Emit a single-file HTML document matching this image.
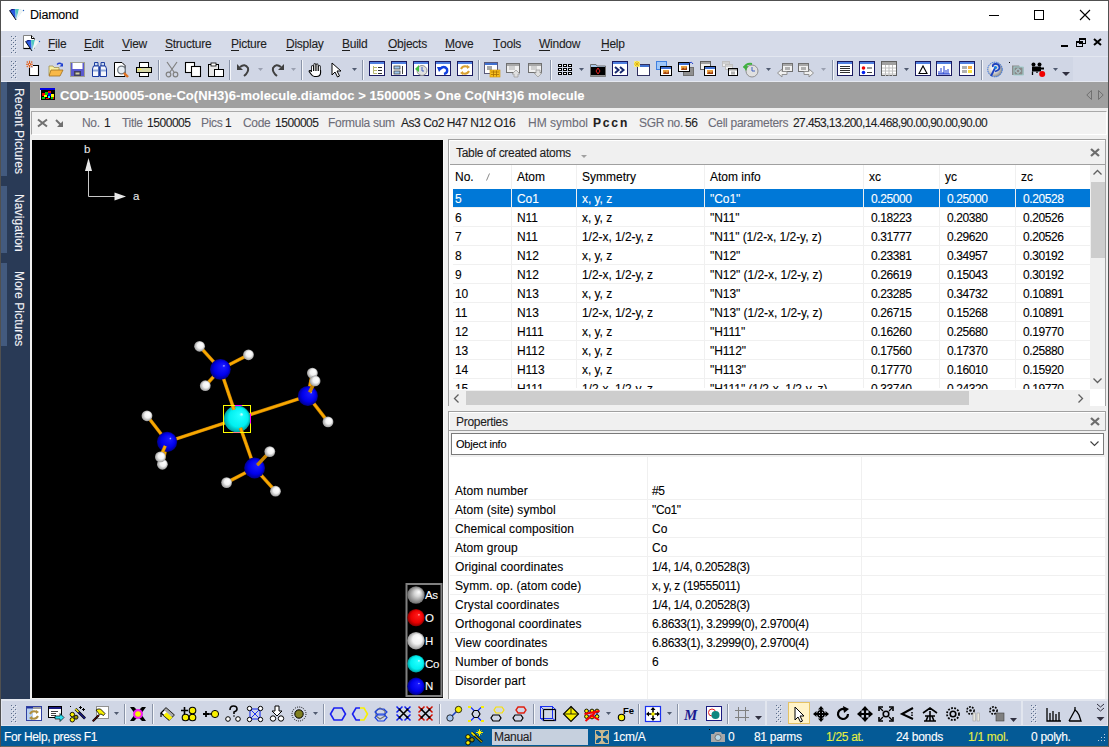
<!DOCTYPE html>
<html><head><meta charset="utf-8">
<style>
*{margin:0;padding:0;box-sizing:border-box}
html,body{width:1109px;height:747px;overflow:hidden;background:#f0f0f0;font-family:"Liberation Sans",sans-serif;font-size:12px;color:#000}
.a{position:absolute}
.t{position:absolute;white-space:nowrap;line-height:14px;-webkit-text-stroke:0.1px currentColor}
svg{position:absolute;overflow:visible}
u{text-decoration:none;border-bottom:1px solid currentColor;line-height:11px;display:inline-block}
</style></head><body>

<div class="a" style="left:0px;top:0px;width:1109px;height:31px;background:#fff;"></div>
<div class="t" style="left:30px;top:8px;font-size:12.5px;color:#000;font-weight:normal;letter-spacing:-0.2px;">Diamond</div>
<svg style="left:9px;top:9px;" width="15" height="11" viewBox="0 0 15 11"><path d="M0.5 1.5L3 0H11L14 1.5L7 11Z" fill="#c8e8f0"/><path d="M0.5 1.5L3 0H6L7 11Z" fill="#2a5ae0"/><path d="M0.5 1.5L3 0H6L2.5 1.5Z" fill="#1a1a70"/><path d="M6 0H10L7.5 11Z" fill="#50c8c0"/><path d="M7 3L8 11L6 11Z" fill="#a8c8f0"/><path d="M10 0L14 1.5L7 11Z" fill="#f0f4f4"/><path d="M0.5 1.5L7 11" stroke="#000" stroke-width="0.9"/><circle cx="14.5" cy="1.5" r="0.7" fill="#2060c0"/></svg>
<div class="a" style="left:989px;top:15px;width:10px;height:1px;background:#000;"></div>
<div class="a" style="left:1034px;top:10px;width:10px;height:10px;border:1px solid #000"></div>
<svg style="left:1080px;top:10px;" width="10" height="10" viewBox="0 0 10 10"><path d="M0 0L10 10M10 0L0 10" stroke="#000" stroke-width="1.1"/></svg>
<div class="a" style="left:0px;top:31px;width:1109px;height:51px;background:#d6dbe9;"></div>
<div class="a" style="left:0px;top:56px;width:1109px;height:1px;background:#e3e7f0;"></div>
<div class="a" style="left:2px;top:57px;width:1071px;height:24px;background:#d0d6e5;"></div>
<div class="a" style="left:0px;top:81px;width:1109px;height:1px;background:#e6e9f1;"></div>
<svg style="left:11px;top:36px;" width="6" height="20" viewBox="0 0 6 20"><rect x="1" y="1" width="1" height="1" fill="#e8ebf2"/><rect x="0" y="0" width="1" height="1" fill="#5b6d8a"/><rect x="5" y="1" width="1" height="1" fill="#e8ebf2"/><rect x="4" y="0" width="1" height="1" fill="#5b6d8a"/><rect x="3" y="3" width="1" height="1" fill="#e8ebf2"/><rect x="2" y="2" width="1" height="1" fill="#5b6d8a"/><rect x="1" y="5" width="1" height="1" fill="#e8ebf2"/><rect x="0" y="4" width="1" height="1" fill="#5b6d8a"/><rect x="5" y="5" width="1" height="1" fill="#e8ebf2"/><rect x="4" y="4" width="1" height="1" fill="#5b6d8a"/><rect x="3" y="7" width="1" height="1" fill="#e8ebf2"/><rect x="2" y="6" width="1" height="1" fill="#5b6d8a"/><rect x="1" y="9" width="1" height="1" fill="#e8ebf2"/><rect x="0" y="8" width="1" height="1" fill="#5b6d8a"/><rect x="5" y="9" width="1" height="1" fill="#e8ebf2"/><rect x="4" y="8" width="1" height="1" fill="#5b6d8a"/><rect x="3" y="11" width="1" height="1" fill="#e8ebf2"/><rect x="2" y="10" width="1" height="1" fill="#5b6d8a"/><rect x="1" y="13" width="1" height="1" fill="#e8ebf2"/><rect x="0" y="12" width="1" height="1" fill="#5b6d8a"/><rect x="5" y="13" width="1" height="1" fill="#e8ebf2"/><rect x="4" y="12" width="1" height="1" fill="#5b6d8a"/><rect x="3" y="15" width="1" height="1" fill="#e8ebf2"/><rect x="2" y="14" width="1" height="1" fill="#5b6d8a"/><rect x="1" y="17" width="1" height="1" fill="#e8ebf2"/><rect x="0" y="16" width="1" height="1" fill="#5b6d8a"/><rect x="5" y="17" width="1" height="1" fill="#e8ebf2"/><rect x="4" y="16" width="1" height="1" fill="#5b6d8a"/></svg>
<svg style="left:23px;top:35px;" width="12" height="14" viewBox="0 0 12 14"><path d="M0.5 0.5H8.5L11.5 3.5V13.5H0.5Z" fill="#fff" stroke="#808080"/><path d="M8.5 0.5V3.5H11.5" fill="none" stroke="#000"/><path d="M0.5 13.5H9" stroke="#000" stroke-width="1.2"/></svg>
<svg style="left:25px;top:40px;" width="15" height="11" viewBox="0 0 15 11"><path d="M0.5 1.5L3 0H11L14 1.5L7 11Z" fill="#c8e8f0"/><path d="M0.5 1.5L3 0H6L7 11Z" fill="#2a5ae0"/><path d="M0.5 1.5L3 0H6L2.5 1.5Z" fill="#1a1a70"/><path d="M6 0H10L7.5 11Z" fill="#50c8c0"/><path d="M7 3L8 11L6 11Z" fill="#a8c8f0"/><path d="M10 0L14 1.5L7 11Z" fill="#f0f4f4"/><path d="M0.5 1.5L7 11" stroke="#000" stroke-width="0.9"/><circle cx="14.5" cy="1.5" r="0.7" fill="#2060c0"/></svg>
<div class="t" style="left:48px;top:37px;font-size:12px;color:#1e1e1e;font-weight:normal;letter-spacing:-0.25px;"><u>F</u>ile</div>
<div class="t" style="left:84px;top:37px;font-size:12px;color:#1e1e1e;font-weight:normal;letter-spacing:-0.25px;"><u>E</u>dit</div>
<div class="t" style="left:122px;top:37px;font-size:12px;color:#1e1e1e;font-weight:normal;letter-spacing:-0.25px;"><u>V</u>iew</div>
<div class="t" style="left:165px;top:37px;font-size:12px;color:#1e1e1e;font-weight:normal;letter-spacing:-0.25px;"><u>S</u>tructure</div>
<div class="t" style="left:231px;top:37px;font-size:12px;color:#1e1e1e;font-weight:normal;letter-spacing:-0.25px;"><u>P</u>icture</div>
<div class="t" style="left:286px;top:37px;font-size:12px;color:#1e1e1e;font-weight:normal;letter-spacing:-0.25px;"><u>D</u>isplay</div>
<div class="t" style="left:342px;top:37px;font-size:12px;color:#1e1e1e;font-weight:normal;letter-spacing:-0.25px;"><u>B</u>uild</div>
<div class="t" style="left:388px;top:37px;font-size:12px;color:#1e1e1e;font-weight:normal;letter-spacing:-0.25px;"><u>O</u>bjects</div>
<div class="t" style="left:445px;top:37px;font-size:12px;color:#1e1e1e;font-weight:normal;letter-spacing:-0.25px;"><u>M</u>ove</div>
<div class="t" style="left:493px;top:37px;font-size:12px;color:#1e1e1e;font-weight:normal;letter-spacing:-0.25px;"><u>T</u>ools</div>
<div class="t" style="left:539px;top:37px;font-size:12px;color:#1e1e1e;font-weight:normal;letter-spacing:-0.25px;"><u>W</u>indow</div>
<div class="t" style="left:601px;top:37px;font-size:12px;color:#1e1e1e;font-weight:normal;letter-spacing:-0.25px;"><u>H</u>elp</div>
<div class="a" style="left:1061px;top:45px;width:7px;height:2px;background:#000;"></div>
<svg style="left:1076px;top:38px;" width="10" height="9" viewBox="0 0 10 9"><rect x="0.5" y="3.5" width="6" height="5" fill="none" stroke="#000"/><rect x="3.5" y="0.5" width="6" height="5" fill="none" stroke="#000"/><rect x="3" y="0" width="7" height="2" fill="#000"/><rect x="0" y="3" width="7" height="2" fill="#000"/></svg>
<svg style="left:1093px;top:38px;" width="9" height="8" viewBox="0 0 9 8"><path d="M1 1L8 7M8 1L1 7" stroke="#000" stroke-width="2"/></svg>
<svg style="left:11px;top:61px;" width="6" height="20" viewBox="0 0 6 20"><rect x="1" y="1" width="1" height="1" fill="#e8ebf2"/><rect x="0" y="0" width="1" height="1" fill="#5b6d8a"/><rect x="5" y="1" width="1" height="1" fill="#e8ebf2"/><rect x="4" y="0" width="1" height="1" fill="#5b6d8a"/><rect x="3" y="3" width="1" height="1" fill="#e8ebf2"/><rect x="2" y="2" width="1" height="1" fill="#5b6d8a"/><rect x="1" y="5" width="1" height="1" fill="#e8ebf2"/><rect x="0" y="4" width="1" height="1" fill="#5b6d8a"/><rect x="5" y="5" width="1" height="1" fill="#e8ebf2"/><rect x="4" y="4" width="1" height="1" fill="#5b6d8a"/><rect x="3" y="7" width="1" height="1" fill="#e8ebf2"/><rect x="2" y="6" width="1" height="1" fill="#5b6d8a"/><rect x="1" y="9" width="1" height="1" fill="#e8ebf2"/><rect x="0" y="8" width="1" height="1" fill="#5b6d8a"/><rect x="5" y="9" width="1" height="1" fill="#e8ebf2"/><rect x="4" y="8" width="1" height="1" fill="#5b6d8a"/><rect x="3" y="11" width="1" height="1" fill="#e8ebf2"/><rect x="2" y="10" width="1" height="1" fill="#5b6d8a"/><rect x="1" y="13" width="1" height="1" fill="#e8ebf2"/><rect x="0" y="12" width="1" height="1" fill="#5b6d8a"/><rect x="5" y="13" width="1" height="1" fill="#e8ebf2"/><rect x="4" y="12" width="1" height="1" fill="#5b6d8a"/><rect x="3" y="15" width="1" height="1" fill="#e8ebf2"/><rect x="2" y="14" width="1" height="1" fill="#5b6d8a"/><rect x="1" y="17" width="1" height="1" fill="#e8ebf2"/><rect x="0" y="16" width="1" height="1" fill="#5b6d8a"/><rect x="5" y="17" width="1" height="1" fill="#e8ebf2"/><rect x="4" y="16" width="1" height="1" fill="#5b6d8a"/></svg>
<svg style="left:25px;top:62px;" width="16" height="16" viewBox="0 0 16 16"><path d="M4.5 3.5H13.5V13.5H4.5Z" fill="#fff" stroke="#000" stroke-width="1.1"/><rect x="1" y="-1" width="7" height="7" fill="#d0d6e5"/><g stroke="#e06020" stroke-width="1.1"><path d="M4.5 -1.2V5.8M1 2.3H8"/></g><g fill="#e06020"><circle cx="2.3" cy="0.1" r="0.8"/><circle cx="6.7" cy="0.1" r="0.8"/><circle cx="2.3" cy="4.5" r="0.8"/><circle cx="6.7" cy="4.5" r="0.8"/><circle cx="4.5" cy="2.3" r="1.6"/></g><circle cx="4.5" cy="2.3" r="0.6" fill="#fff"/></svg>
<svg style="left:48px;top:62px;" width="16" height="16" viewBox="0 0 16 16"><path d="M1 4H5L6 5.5H11V13H1Z" fill="#f8f0a0" stroke="#a09050" stroke-width="0.8"/><path d="M3 8H15L12 14H1Z" fill="#f8b848" stroke="#a07020" stroke-width="0.8"/><path d="M9 2.5Q11.5 0 14 2.5" stroke="#2040d0" stroke-width="1.3" fill="none"/><path d="M15 1V4.5H11.5Z" fill="#2040d0"/></svg>
<svg style="left:70px;top:62px;" width="16" height="16" viewBox="0 0 16 16"><rect x="0.5" y="0.5" width="14" height="14" fill="#5a5ad0" stroke="#a0a090"/><rect x="2.5" y="1" width="10" height="6" fill="#fff"/><rect x="4" y="9" width="7" height="5" fill="#404060"/><rect x="5.5" y="10.5" width="4" height="2" fill="#d0d0a0"/></svg>
<svg style="left:92px;top:62px;" width="16" height="16" viewBox="0 0 16 16"><path d="M2.5 0.5H6V4H2.5Z" fill="#c8d8f0" stroke="#2040a0"/><path d="M9 0.5H12.5V4H9Z" fill="#c8d8f0" stroke="#2040a0"/><path d="M0.5 14.5V7L1.5 4H7V14.5Z" fill="#f4f6fc" stroke="#1a3aa0"/><path d="M8 14.5V4H13.5L14.5 7V14.5Z" fill="#f4f6fc" stroke="#1a3aa0"/><rect x="1" y="7.5" width="5.5" height="2" fill="#90a8d8"/><rect x="8.5" y="7.5" width="5.5" height="2" fill="#90a8d8"/><rect x="6.5" y="5" width="2" height="9" fill="#1a3aa0"/></svg>
<svg style="left:114px;top:62px;" width="16" height="16" viewBox="0 0 16 16"><path d="M0.5 0.5H8L11 3.5V14.5H0.5Z" fill="#fff" stroke="#000"/><circle cx="7.5" cy="8" r="3.8" fill="#e8eef4" stroke="#707880" stroke-width="1.3"/><path d="M10 11L14 15" stroke="#e07020" stroke-width="2.4"/></svg>
<svg style="left:136px;top:62px;" width="16" height="16" viewBox="0 0 16 16"><rect x="3.5" y="0.5" width="9" height="5" fill="#fff" stroke="#000"/><rect x="0.5" y="5.5" width="15" height="5" fill="#d8d8a8" stroke="#000"/><rect x="2" y="7" width="1" height="1" fill="#ff0"/><rect x="4" y="7" width="1" height="1" fill="#ff0"/><rect x="3.5" y="10.5" width="9" height="4" fill="#fff" stroke="#000"/></svg>
<svg style="left:164px;top:62px;" width="16" height="16" viewBox="0 0 16 16"><path d="M3 0L10 10M13 0L6 10" stroke="#808080" stroke-width="1.2"/><circle cx="4.5" cy="12.5" r="2.3" fill="none" stroke="#808080" stroke-width="1.2"/><circle cx="11.5" cy="12.5" r="2.3" fill="none" stroke="#808080" stroke-width="1.2"/></svg>
<svg style="left:185px;top:62px;" width="16" height="16" viewBox="0 0 16 16"><rect x="0.5" y="0.5" width="9" height="10" fill="#fff" stroke="#000" stroke-width="1.1"/><rect x="6.5" y="4.5" width="9" height="10" fill="#fff" stroke="#000" stroke-width="1.1"/></svg>
<svg style="left:208px;top:62px;" width="16" height="16" viewBox="0 0 16 16"><rect x="0.5" y="2.5" width="10" height="12" fill="#e8e8e8" stroke="#000"/><rect x="3" y="1" width="5" height="3" fill="#fff" stroke="#000" stroke-width="0.8"/><rect x="6.5" y="7.5" width="9" height="7" fill="#fff" stroke="#000"/></svg>
<svg style="left:236px;top:62px;" width="16" height="16" viewBox="0 0 16 16"><path d="M4 5Q9 1 12 6Q13 10 8 14" stroke="#404040" stroke-width="2" fill="none"/><path d="M1 2V8H7Z" fill="#404040"/></svg>
<svg style="left:269px;top:62px;" width="16" height="16" viewBox="0 0 16 16"><path d="M12 5Q7 1 4 6Q3 10 8 14" stroke="#404040" stroke-width="2" fill="none"/><path d="M15 2V8H9Z" fill="#404040"/></svg>
<svg style="left:308px;top:62px;" width="16" height="16" viewBox="0 0 16 16"><g stroke-linecap="round"><path d="M4.5 4.5V9M6.8 2.5V9M9.1 2.8V9M11.4 4.5V9" stroke="#000" stroke-width="2.6"/></g><path d="M3.5 8.5H12.6V10.5Q12.6 14.5 8.5 14.5H6.5Q4.5 14.5 3 12L1.2 9.6Q1 8.2 2.4 8.6L3.5 9.5Z" fill="#fff" stroke="#000" stroke-width="1.1" stroke-linejoin="round"/><g stroke-linecap="round"><path d="M4.5 4.5V10M6.8 2.5V10M9.1 2.8V10M11.4 4.5V10" stroke="#fff" stroke-width="1.1"/></g></svg>
<svg style="left:329px;top:62px;" width="16" height="16" viewBox="0 0 16 16"><path d="M3 1V13L6 10L8.5 15L10.5 14L8 9H12Z" fill="#fff" stroke="#000" stroke-width="1"/></svg>
<svg style="left:369px;top:61px;" width="16" height="16" viewBox="0 0 16 16"><rect x="0.5" y="0.5" width="15" height="14" fill="#fff" stroke="#1a1a60"/><rect x="1" y="1" width="14" height="2" fill="#5080e0"/><path d="M4.5 5V12.5M4.5 6.5H8M4.5 9.5H8M4.5 12.5H8" stroke="#b8b870"/><path d="M9 6.5H13M9 9.5H13M9 12.5H13" stroke="#303030"/></svg>
<svg style="left:391px;top:61px;" width="16" height="16" viewBox="0 0 16 16"><rect x="0.5" y="0.5" width="15" height="14" fill="#fff" stroke="#1a1a60"/><rect x="1" y="1" width="14" height="2" fill="#5080e0"/><rect x="3" y="5" width="6" height="3" fill="#a0c8f0" stroke="#404040" stroke-width="0.8"/><rect x="3" y="10" width="6" height="3" fill="#a0c8f0" stroke="#404040" stroke-width="0.8"/><path d="M11.5 5V13" stroke="#404040"/></svg>
<svg style="left:413px;top:61px;" width="16" height="16" viewBox="0 0 16 16"><rect x="0.5" y="0.5" width="15" height="14" fill="#fff" stroke="#1a1a60"/><rect x="1" y="1" width="14" height="2" fill="#5080e0"/><circle cx="9" cy="9.5" r="5" fill="#e0e0e0" stroke="#909090"/><path d="M9 6V10H11" stroke="#4060c0" fill="none"/><path d="M2 8L6 4L6 11Z" fill="#40c040"/></svg>
<svg style="left:435px;top:61px;" width="16" height="16" viewBox="0 0 16 16"><rect x="0.5" y="0.5" width="15" height="14" fill="#fff" stroke="#1a1a60"/><rect x="1" y="1" width="14" height="2" fill="#5080e0"/><path d="M5 8Q9 4 12 8Q13 12 9 13" stroke="#1040e0" stroke-width="2.4" fill="none"/><path d="M2 6H8L4 11Z" fill="#1040e0"/></svg>
<svg style="left:457px;top:61px;" width="16" height="16" viewBox="0 0 16 16"><rect x="0.5" y="0.5" width="15" height="14" fill="#fff" stroke="#1a1a60"/><rect x="1" y="1" width="14" height="2" fill="#5080e0"/><path d="M4 8Q6 4 11 6M12 10Q10 14 5 12" stroke="#d8a030" stroke-width="2" fill="none"/><path d="M10 4L13 6L10 8Z M6 10L3 12L6 14Z" fill="#d8a030"/></svg>
<svg style="left:484px;top:62px;" width="16" height="16" viewBox="0 0 16 16"><rect x="0.5" y="0.5" width="13" height="11" fill="#fff" stroke="#5a5a7a"/><rect x="1" y="1" width="12" height="2" fill="#4070d0"/><path d="M3 5H8M3 7H8" stroke="#505050"/><rect x="6" y="8" width="10" height="7" fill="#f8c020" stroke="#d09000" stroke-width="0.6"/><path d="M7 10H15M7 12.5H15M9.5 8.5V14.5M12.5 8.5V14.5" stroke="#a87000" stroke-width="0.8"/></svg>
<svg style="left:506px;top:62px;" width="16" height="16" viewBox="0 0 16 16"><rect x="0.5" y="1.5" width="13" height="9" fill="#f0f0f0" stroke="#707070"/><rect x="1" y="2" width="12" height="2" fill="#a8a8a8"/><path d="M3 5H9M3 7H9" stroke="#b0b0b0"/><path d="M10 8L14 12H12V15H8V12H6Z" fill="#e0e0e0" stroke="#a0a0a0" stroke-width="0.8"/></svg>
<svg style="left:528px;top:62px;" width="16" height="16" viewBox="0 0 16 16"><rect x="0.5" y="1.5" width="13" height="9" fill="#f0f0f0" stroke="#707070"/><rect x="1" y="2" width="12" height="2" fill="#a8a8a8"/><path d="M3 5H9M3 7H9" stroke="#b0b0b0"/><path d="M10 15L14 11H12V8H8V11H6Z" fill="#e0e0e0" stroke="#a0a0a0" stroke-width="0.8"/></svg>
<svg style="left:557px;top:62px;" width="16" height="16" viewBox="0 0 16 16"><rect x="1" y="2" width="4" height="3" fill="#000"/><rect x="2" y="3" width="2" height="1" fill="#fff"/><rect x="1" y="6" width="4" height="3" fill="#000"/><rect x="2" y="7" width="2" height="1" fill="#fff"/><rect x="1" y="10" width="4" height="3" fill="#000"/><rect x="2" y="11" width="2" height="1" fill="#fff"/><rect x="6" y="2" width="4" height="3" fill="#000"/><rect x="7" y="3" width="2" height="1" fill="#fff"/><rect x="6" y="6" width="4" height="3" fill="#000"/><rect x="7" y="7" width="2" height="1" fill="#fff"/><rect x="6" y="10" width="4" height="3" fill="#000"/><rect x="7" y="11" width="2" height="1" fill="#fff"/><rect x="11" y="2" width="4" height="3" fill="#000"/><rect x="12" y="3" width="2" height="1" fill="#fff"/><rect x="11" y="6" width="4" height="3" fill="#000"/><rect x="12" y="7" width="2" height="1" fill="#fff"/><rect x="11" y="10" width="4" height="3" fill="#000"/><rect x="12" y="11" width="2" height="1" fill="#fff"/></svg>
<svg style="left:590px;top:62px;" width="16" height="16" viewBox="0 0 16 16"><path d="M0.5 2.5H6L7 4H15.5V14.5H0.5Z" fill="#a8c8e8" stroke="#707070"/><rect x="1" y="5" width="14" height="8" fill="#000"/><path d="M8 6L10 9L8 12L6 9Z" fill="none" stroke="#e02020"/><rect x="0.5" y="13" width="15" height="1.5" fill="#909090"/></svg>
<svg style="left:612px;top:61px;" width="16" height="16" viewBox="0 0 16 16"><rect x="0.5" y="0.5" width="15" height="14" fill="#fff" stroke="#1a1a60"/><rect x="1" y="1" width="14" height="2" fill="#5080e0"/><path d="M3 6L6.5 9L3 12M8 6L11.5 9L8 12" stroke="#1a2a70" stroke-width="2" fill="none"/></svg>
<svg style="left:634px;top:61px;" width="16" height="16" viewBox="0 0 16 16"><rect x="3.5" y="3.5" width="12" height="11" fill="#fff" stroke="#303060"/><rect x="4" y="4" width="11" height="2" fill="#4070d0"/><rect x="0" y="0" width="6" height="6" fill="#f8f080"/><path d="M3 0V6M0 3H6M1 1L5 5M5 1L1 5" stroke="#e0b000" stroke-width="0.8"/></svg>
<svg style="left:656px;top:61px;" width="16" height="16" viewBox="0 0 16 16"><rect x="0.5" y="0.5" width="10" height="8" fill="#a0c8f8" stroke="#4080e0"/><rect x="4.5" y="5.5" width="11" height="9" fill="#fff" stroke="#000"/><rect x="5" y="6" width="10" height="2" fill="#4070d0"/><rect x="7" y="9" width="6" height="4" fill="#e8a040"/><path d="M7 13L9 10.5L11 12L13 10V13Z" fill="#a04010"/></svg>
<svg style="left:678px;top:61px;" width="16" height="16" viewBox="0 0 16 16"><rect x="5.5" y="6.5" width="10" height="8" fill="#909090" stroke="#707070"/><rect x="0.5" y="1.5" width="11" height="9" fill="#fff" stroke="#000"/><rect x="1" y="2" width="10" height="2" fill="#4070d0"/><rect x="3" y="5" width="6" height="4" fill="#e8a040"/><path d="M3 9L5 6.5L7 8L9 6V9Z" fill="#a04010"/><path d="M11 2Q14 0 15 3" stroke="#2040d0" fill="none"/></svg>
<svg style="left:700px;top:61px;" width="16" height="16" viewBox="0 0 16 16"><rect x="0.5" y="0.5" width="10" height="8" fill="#f0f0f0" stroke="#606060"/><rect x="1" y="1" width="9" height="2" fill="#a0a0a0"/><rect x="4.5" y="5.5" width="11" height="9" fill="#fff" stroke="#000"/><rect x="5" y="6" width="10" height="2" fill="#4070d0"/><rect x="7" y="9" width="6" height="4" fill="#e8a040"/><path d="M7 13L9 10.5L11 12L13 10V13Z" fill="#a04010"/></svg>
<svg style="left:722px;top:61px;" width="16" height="16" viewBox="0 0 16 16"><rect x="0.5" y="0.5" width="7" height="5" fill="#f0f0f0" stroke="#c0c0c0"/><rect x="1" y="1" width="6" height="2" fill="#d0d0d0"/><rect x="3.5" y="3.5" width="7" height="5" fill="#f0f0f0" stroke="#c0c0c0"/><rect x="4" y="4" width="6" height="2" fill="#d0d0d0"/><rect x="6.5" y="7.5" width="9" height="7" fill="#fff" stroke="#000"/><rect x="7" y="8" width="8" height="1.5" fill="#a0a0a0"/><rect x="9" y="10.5" width="4" height="3" fill="#b0b0b0"/></svg>
<svg style="left:743px;top:62px;" width="16" height="16" viewBox="0 0 16 16"><circle cx="9" cy="9" r="6" fill="#e0e0e0" stroke="#909090"/><path d="M9 5V9H12" stroke="#4060c0" fill="none"/><path d="M1 6Q3 1 9 2" stroke="#40b040" stroke-width="2" fill="none"/><path d="M0 4L3 9L5 4Z" fill="#40b040"/></svg>
<svg style="left:777px;top:62px;" width="16" height="16" viewBox="0 0 16 16"><rect x="5.5" y="1.5" width="10" height="8" fill="#f0f0f0" stroke="#707070"/><rect x="6" y="2" width="9" height="2" fill="#a8a8a8"/><rect x="8" y="5" width="5" height="3" fill="#b0b0b0"/><path d="M0.5 11L5 7V9.5H10V12.5H5V15Z" fill="#f0f0f0" stroke="#909090"/></svg>
<svg style="left:798px;top:62px;" width="16" height="16" viewBox="0 0 16 16"><rect x="0.5" y="1.5" width="10" height="8" fill="#f0f0f0" stroke="#707070"/><rect x="1" y="2" width="9" height="2" fill="#a8a8a8"/><rect x="3" y="5" width="5" height="3" fill="#b0b0b0"/><path d="M15.5 11L11 7V9.5H6V12.5H11V15Z" fill="#f0f0f0" stroke="#909090"/></svg>
<svg style="left:837px;top:61px;" width="16" height="16" viewBox="0 0 16 16"><rect x="0.5" y="0.5" width="15" height="14" fill="#fff" stroke="#1a1a60"/><rect x="1" y="1" width="14" height="2" fill="#5080e0"/><path d="M3 5.5H13M3 7.5H13M3 9.5H13M3 11.5H13" stroke="#303030"/></svg>
<svg style="left:859px;top:61px;" width="16" height="16" viewBox="0 0 16 16"><rect x="0.5" y="0.5" width="15" height="14" fill="#fff" stroke="#1a1a60"/><rect x="1" y="1" width="14" height="2" fill="#5080e0"/><circle cx="4.5" cy="7" r="1.8" fill="#f00000"/><circle cx="4.5" cy="11.5" r="1.8" fill="#0020f0"/><path d="M8 7H13M8 11.5H13" stroke="#404040" stroke-width="1.2"/></svg>
<svg style="left:881px;top:61px;" width="16" height="16" viewBox="0 0 16 16"><rect x="0.5" y="0.5" width="15" height="14" fill="#fff" stroke="#606060"/><rect x="1" y="1" width="14" height="3" fill="#a0a0a0"/><path d="M1 7H15M1 10H15M1 13H15M4.5 4V15M8 4V15M11.5 4V15" stroke="#c0c0c0"/></svg>
<svg style="left:915px;top:61px;" width="16" height="16" viewBox="0 0 16 16"><rect x="0.5" y="0.5" width="15" height="14" fill="#fff" stroke="#1a1a60"/><rect x="1" y="1" width="14" height="2" fill="#5080e0"/><path d="M4 12.5L8 5L12 12.5Z" fill="none" stroke="#000" stroke-width="1.1"/></svg>
<svg style="left:936px;top:61px;" width="16" height="16" viewBox="0 0 16 16"><rect x="0.5" y="0.5" width="15" height="14" fill="#fff" stroke="#1a1a60"/><rect x="1" y="1" width="14" height="2" fill="#5080e0"/><path d="M2 13H14M3 13V10M5 13V7M7 13V11M8 13V5M10 13V9M12 13V8" stroke="#1a3ad0"/></svg>
<svg style="left:959px;top:61px;" width="16" height="16" viewBox="0 0 16 16"><rect x="0.5" y="0.5" width="15" height="14" fill="#fff" stroke="#1a1a60"/><rect x="1" y="1" width="14" height="2" fill="#5080e0"/><rect x="3" y="5" width="5" height="3" fill="#b0b0b0"/><rect x="3" y="9" width="5" height="3" fill="#b0b0b0"/><rect x="9" y="5" width="4" height="3" fill="#f8b040"/><rect x="9" y="9" width="4" height="3" fill="#f8e040"/></svg>
<svg style="left:987px;top:62px;" width="16" height="16" viewBox="0 0 16 16"><defs><radialGradient id="hg" cx="0.4" cy="0.4" r="0.6"><stop offset="0" stop-color="#ffffff"/><stop offset="0.6" stop-color="#d0d0d0"/><stop offset="1" stop-color="#909090"/></radialGradient></defs><circle cx="8" cy="7.5" r="7.3" fill="url(#hg)" stroke="#3070e0" stroke-width="1" stroke-dasharray="1.5 0.7"/><path d="M8 9.5Q13 8 12.5 5Q11.5 1.5 8 2Q5 2.5 6 5" stroke="#1a40c0" stroke-width="1.8" fill="none"/><path d="M8.5 5L4 14" stroke="#1a40c0" stroke-width="1.8"/><circle cx="8.5" cy="5.5" r="1.6" fill="#1a80e0"/></svg>
<svg style="left:1009px;top:62px;" width="16" height="16" viewBox="0 0 16 16"><rect x="0" y="0" width="1" height="1" fill="#000"/><path d="M3 3.5H10L11 5H14.5V13H3Z" fill="#8a8a8a"/><rect x="5" y="5" width="9" height="8" fill="none" stroke="#a0d0d0" stroke-width="1"/><path d="M9 6.5L11.5 9L9 11.5L6.5 9Z" fill="none" stroke="#c0e8f0" stroke-width="1"/></svg>
<svg style="left:1030px;top:62px;" width="16" height="16" viewBox="0 0 16 16"><circle cx="3.5" cy="2.5" r="2" fill="#000"/><circle cx="9.5" cy="2.5" r="2" fill="#000"/><rect x="2" y="4.5" width="9" height="5" fill="#000"/><rect x="11" y="5.5" width="3" height="2" fill="#000"/><path d="M2.5 9.5V13M7 9.5V11" stroke="#000" stroke-width="1.3"/><circle cx="12.2" cy="12" r="3" fill="#f00000"/></svg>
<svg style="left:258px;top:68px;" width="5" height="3" viewBox="0 0 5 3"><path d="M0 0H5L2.5 3Z" fill="#9aa0b0"/></svg>
<svg style="left:291px;top:68px;" width="5" height="3" viewBox="0 0 5 3"><path d="M0 0H5L2.5 3Z" fill="#9aa0b0"/></svg>
<svg style="left:352px;top:68px;" width="5" height="3" viewBox="0 0 5 3"><path d="M0 0H5L2.5 3Z" fill="#505a70"/></svg>
<svg style="left:579px;top:68px;" width="5" height="3" viewBox="0 0 5 3"><path d="M0 0H5L2.5 3Z" fill="#505a70"/></svg>
<svg style="left:766px;top:68px;" width="5" height="3" viewBox="0 0 5 3"><path d="M0 0H5L2.5 3Z" fill="#505a70"/></svg>
<svg style="left:904px;top:68px;" width="5" height="3" viewBox="0 0 5 3"><path d="M0 0H5L2.5 3Z" fill="#505a70"/></svg>
<svg style="left:1053px;top:68px;" width="5" height="3" viewBox="0 0 5 3"><path d="M0 0H5L2.5 3Z" fill="#505a70"/></svg>
<svg style="left:821px;top:68px;" width="5" height="3" viewBox="0 0 5 3"><path d="M0 0H5L2.5 3Z" fill="#9aa0b0"/></svg>
<div class="a" style="left:158px;top:60px;width:1px;height:20px;background:#8a94a8;"></div>
<div class="a" style="left:159px;top:60px;width:1px;height:20px;background:#f4f6fa;"></div>
<div class="a" style="left:229px;top:60px;width:1px;height:20px;background:#8a94a8;"></div>
<div class="a" style="left:230px;top:60px;width:1px;height:20px;background:#f4f6fa;"></div>
<div class="a" style="left:301px;top:60px;width:1px;height:20px;background:#8a94a8;"></div>
<div class="a" style="left:302px;top:60px;width:1px;height:20px;background:#f4f6fa;"></div>
<div class="a" style="left:362px;top:60px;width:1px;height:20px;background:#8a94a8;"></div>
<div class="a" style="left:363px;top:60px;width:1px;height:20px;background:#f4f6fa;"></div>
<div class="a" style="left:478px;top:60px;width:1px;height:20px;background:#8a94a8;"></div>
<div class="a" style="left:479px;top:60px;width:1px;height:20px;background:#f4f6fa;"></div>
<div class="a" style="left:550px;top:60px;width:1px;height:20px;background:#8a94a8;"></div>
<div class="a" style="left:551px;top:60px;width:1px;height:20px;background:#f4f6fa;"></div>
<div class="a" style="left:832px;top:60px;width:1px;height:20px;background:#8a94a8;"></div>
<div class="a" style="left:833px;top:60px;width:1px;height:20px;background:#f4f6fa;"></div>
<div class="a" style="left:981px;top:60px;width:1px;height:20px;background:#8a94a8;"></div>
<div class="a" style="left:982px;top:60px;width:1px;height:20px;background:#f4f6fa;"></div>
<svg style="left:1062px;top:72px;" width="8" height="4" viewBox="0 0 8 4"><path d="M0 0H8L4 4Z" fill="#303040"/></svg>
<div class="a" style="left:0px;top:82px;width:30px;height:618px;background:#293a56;"></div>
<div class="a" style="left:1px;top:82px;width:6px;height:94px;background:#435a7e;"></div>
<div class="a" style="left:1px;top:186px;width:6px;height:67px;background:#435a7e;"></div>
<div class="a" style="left:1px;top:263px;width:6px;height:83px;background:#435a7e;"></div>
<div class="a" style="left:30px;top:82px;width:2px;height:618px;background:#f0f0f0;"></div>
<div class="t" style="left:26px;top:88px;font-size:12px;color:#f4f4f8;letter-spacing:0.1px;transform-origin:0 0;transform:rotate(90deg)">Recent Pictures</div>
<div class="t" style="left:26px;top:194px;font-size:12px;color:#f4f4f8;letter-spacing:0.1px;transform-origin:0 0;transform:rotate(90deg)">Navigation</div>
<div class="t" style="left:26px;top:271px;font-size:12px;color:#f4f4f8;letter-spacing:0.1px;transform-origin:0 0;transform:rotate(90deg)">More Pictures</div>
<div class="a" style="left:30px;top:82px;width:1078px;height:26px;background:#a0a0a0;"></div>
<svg style="left:40px;top:88px;" width="15" height="12" viewBox="0 0 15 12"><rect x="0" y="0" width="15" height="2" fill="#0000e0"/><rect x="0" y="2" width="1" height="10" fill="#e0e0e0"/><rect x="1" y="2" width="14" height="10" fill="#000"/><rect x="2" y="5" width="3" height="3" fill="#f00"/><rect x="5" y="4" width="3" height="3" fill="#0c0"/><rect x="8" y="3" width="3" height="3" fill="#f00"/><rect x="8" y="5" width="3" height="3" fill="#00f"/><rect x="11" y="6" width="3" height="3" fill="#ff0"/><rect x="4" y="7" width="3" height="2" fill="#ff0"/><rect x="2" y="9" width="3" height="2" fill="#0c0"/><rect x="8" y="8" width="2" height="2" fill="#0ff"/><rect x="11" y="9" width="3" height="2" fill="#0c0"/><rect x="6" y="10" width="3" height="1" fill="#f00"/><rect x="13" y="9" width="1" height="2" fill="#f00"/></svg>
<svg style="left:1086px;top:90px;" width="18" height="10" viewBox="0 0 18 10"><path d="M5.5 0.5L0.8 5L5.5 9.5Z" fill="none" stroke="#707070"/><path d="M12.5 0.5L17.2 5L12.5 9.5Z" fill="none" stroke="#707070"/></svg>
<div class="t" style="left:60px;top:89px;font-size:13px;color:#fff;font-weight:bold;letter-spacing:0.05px;">COD-1500005-one-Co(NH3)6-molecule.diamdoc &gt; 1500005 &gt; One Co(NH3)6 molecule</div>
<div class="a" style="left:30px;top:108px;width:1078px;height:32px;background:#f0f0f0;"></div>
<div class="a" style="left:31px;top:111px;width:1076px;height:24px;background:#f2f2f2;border:1px solid #a9a9a9;border-right-color:#fff;border-bottom-color:#fff"></div>
<svg style="left:37px;top:119px;" width="11" height="8" viewBox="0 0 11 8"><path d="M1 0.5L10 7.5M10 0.5L1 7.5" stroke="#707070" stroke-width="2"/></svg>
<svg style="left:55px;top:119px;" width="9" height="8" viewBox="0 0 9 8"><path d="M1 1L7 7" stroke="#707070" stroke-width="2"/><path d="M8 2L8 8L2 8Z" fill="#707070"/></svg>
<div class="t" style="left:82px;top:116px;font-size:12px;color:#6d6d78;font-weight:normal;letter-spacing:-0.3px;">No.</div>
<div class="t" style="left:104px;top:116px;font-size:12px;color:#1e1e1e;font-weight:normal;letter-spacing:-0.45px;">1</div>
<div class="t" style="left:122px;top:116px;font-size:12px;color:#6d6d78;font-weight:normal;letter-spacing:-0.3px;">Title</div>
<div class="t" style="left:147px;top:116px;font-size:12px;color:#1e1e1e;font-weight:normal;letter-spacing:-0.45px;">1500005</div>
<div class="t" style="left:201px;top:116px;font-size:12px;color:#6d6d78;font-weight:normal;letter-spacing:-0.3px;">Pics</div>
<div class="t" style="left:225px;top:116px;font-size:12px;color:#1e1e1e;font-weight:normal;letter-spacing:-0.45px;">1</div>
<div class="t" style="left:243px;top:116px;font-size:12px;color:#6d6d78;font-weight:normal;letter-spacing:-0.3px;">Code</div>
<div class="t" style="left:275px;top:116px;font-size:12px;color:#1e1e1e;font-weight:normal;letter-spacing:-0.45px;">1500005</div>
<div class="t" style="left:328px;top:116px;font-size:12px;color:#6d6d78;font-weight:normal;letter-spacing:-0.3px;">Formula sum</div>
<div class="t" style="left:401px;top:116px;font-size:12px;color:#1e1e1e;font-weight:normal;letter-spacing:-0.45px;">As3 Co2 H47 N12 O16</div>
<div class="t" style="left:528px;top:116px;font-size:12px;color:#6d6d78;font-weight:normal;letter-spacing:-0.3px;"><span style="letter-spacing:0px">HM symbol</span></div>
<div class="t" style="left:593px;top:116px;font-size:12px;color:#1e1e1e;font-weight:normal;letter-spacing:-0.45px;"><b style="letter-spacing:-0.7px">P c c n</b></div>
<div class="t" style="left:639px;top:116px;font-size:12px;color:#6d6d78;font-weight:normal;letter-spacing:-0.3px;">SGR no.</div>
<div class="t" style="left:685px;top:116px;font-size:12px;color:#1e1e1e;font-weight:normal;letter-spacing:-0.45px;">56</div>
<div class="t" style="left:708px;top:116px;font-size:12px;color:#6d6d78;font-weight:normal;letter-spacing:-0.3px;">Cell parameters</div>
<div class="t" style="left:793px;top:116px;font-size:12px;color:#1e1e1e;font-weight:normal;letter-spacing:-0.45px;"><span style="letter-spacing:-0.6px">27.453,13.200,14.468,90.00,90.00,90.00</span></div>
<div class="a" style="left:32px;top:140px;width:411px;height:558px;background:#000;"></div>
<div class="a" style="left:443px;top:140px;width:1px;height:558px;background:#fafafa;"></div>
<svg style="left:0px;top:0px;" width="1109" height="747" viewBox="0 0 1109 747"><defs>
<radialGradient id="gN" cx="0.5" cy="0.5" r="0.5" fx="0.68" fy="0.32"><stop offset="0" stop-color="#c0c0ff"/><stop offset="0.13" stop-color="#1818ff"/><stop offset="0.7" stop-color="#0000ea"/><stop offset="1" stop-color="#000088"/></radialGradient>
<radialGradient id="gC" cx="0.5" cy="0.5" r="0.5" fx="0.68" fy="0.32"><stop offset="0" stop-color="#f0ffff"/><stop offset="0.15" stop-color="#20ffff"/><stop offset="0.72" stop-color="#00f0f0"/><stop offset="1" stop-color="#00a0a0"/></radialGradient>
<radialGradient id="gH" cx="0.5" cy="0.5" r="0.5" fx="0.68" fy="0.32"><stop offset="0" stop-color="#ffffff"/><stop offset="0.55" stop-color="#f2f2f2"/><stop offset="1" stop-color="#9a9a9a"/></radialGradient>
<radialGradient id="gAs" cx="0.5" cy="0.5" r="0.5" fx="0.68" fy="0.32"><stop offset="0" stop-color="#ffffff"/><stop offset="0.4" stop-color="#d4d4d4"/><stop offset="1" stop-color="#707070"/></radialGradient>
<radialGradient id="gO" cx="0.5" cy="0.5" r="0.5" fx="0.68" fy="0.32"><stop offset="0" stop-color="#ffc0c0"/><stop offset="0.15" stop-color="#ff1818"/><stop offset="0.7" stop-color="#ea0000"/><stop offset="1" stop-color="#880000"/></radialGradient>
</defs><line x1="237.2" y1="418.8" x2="307.9" y2="395.9" stroke="#c88000" stroke-width="3.5"/><line x1="237.2" y1="418.8" x2="307.9" y2="395.9" stroke="#f8a800" stroke-width="2.3"/><line x1="237.2" y1="418.8" x2="167.1" y2="441.8" stroke="#c88000" stroke-width="3.5"/><line x1="237.2" y1="418.8" x2="167.1" y2="441.8" stroke="#f8a800" stroke-width="2.3"/><line x1="220.4" y1="369.3" x2="199.6" y2="346.3" stroke="#c88000" stroke-width="3.5"/><line x1="220.4" y1="369.3" x2="199.6" y2="346.3" stroke="#f8a800" stroke-width="2.3"/><line x1="220.4" y1="369.3" x2="248.5" y2="354.8" stroke="#c88000" stroke-width="3.5"/><line x1="220.4" y1="369.3" x2="248.5" y2="354.8" stroke="#f8a800" stroke-width="2.3"/><line x1="220.4" y1="369.3" x2="205.3" y2="385.7" stroke="#c88000" stroke-width="3.5"/><line x1="220.4" y1="369.3" x2="205.3" y2="385.7" stroke="#f8a800" stroke-width="2.3"/><line x1="307.9" y1="395.9" x2="312.4" y2="373.1" stroke="#c88000" stroke-width="3.5"/><line x1="307.9" y1="395.9" x2="312.4" y2="373.1" stroke="#f8a800" stroke-width="2.3"/><line x1="307.9" y1="395.9" x2="328.0" y2="421.9" stroke="#c88000" stroke-width="3.5"/><line x1="307.9" y1="395.9" x2="328.0" y2="421.9" stroke="#f8a800" stroke-width="2.3"/><line x1="167.1" y1="441.8" x2="147.0" y2="415.8" stroke="#c88000" stroke-width="3.5"/><line x1="167.1" y1="441.8" x2="147.0" y2="415.8" stroke="#f8a800" stroke-width="2.3"/><line x1="167.1" y1="441.8" x2="162.4" y2="464.3" stroke="#c88000" stroke-width="3.5"/><line x1="167.1" y1="441.8" x2="162.4" y2="464.3" stroke="#f8a800" stroke-width="2.3"/><line x1="254.6" y1="468.0" x2="226.6" y2="482.6" stroke="#c88000" stroke-width="3.5"/><line x1="254.6" y1="468.0" x2="226.6" y2="482.6" stroke="#f8a800" stroke-width="2.3"/><line x1="254.6" y1="468.0" x2="275.5" y2="491.2" stroke="#c88000" stroke-width="3.5"/><line x1="254.6" y1="468.0" x2="275.5" y2="491.2" stroke="#f8a800" stroke-width="2.3"/><circle cx="237.2" cy="418.8" r="13.3" fill="url(#gC)"/><line x1="234.0" y1="409.6" x2="220.4" y2="369.3" stroke="#c88000" stroke-width="3.5"/><line x1="234.0" y1="409.6" x2="220.4" y2="369.3" stroke="#f8a800" stroke-width="2.3"/><line x1="240.5" y1="427.9" x2="254.6" y2="468.0" stroke="#c88000" stroke-width="3.5"/><line x1="240.5" y1="427.9" x2="254.6" y2="468.0" stroke="#f8a800" stroke-width="2.3"/><circle cx="220.4" cy="369.3" r="10.4" fill="url(#gN)"/><circle cx="307.9" cy="395.9" r="10.0" fill="url(#gN)"/><circle cx="167.1" cy="441.8" r="10.1" fill="url(#gN)"/><circle cx="254.6" cy="468.0" r="10.4" fill="url(#gN)"/><line x1="309.63" y1="392.29" x2="315.1" y2="380.9" stroke="#c88000" stroke-width="3.5"/><line x1="309.63" y1="392.29" x2="315.1" y2="380.9" stroke="#c88400" stroke-width="2.3"/><line x1="165.27" y1="445.91" x2="160.4" y2="456.9" stroke="#c88000" stroke-width="3.5"/><line x1="165.27" y1="445.91" x2="160.4" y2="456.9" stroke="#f8a800" stroke-width="2.3"/><line x1="257.32" y1="465.07" x2="269.8" y2="451.6" stroke="#c88000" stroke-width="3.5"/><line x1="257.32" y1="465.07" x2="269.8" y2="451.6" stroke="#c88400" stroke-width="2.3"/><circle cx="312.4" cy="373.1" r="5.4" fill="url(#gH)"/><circle cx="162.4" cy="464.3" r="5.4" fill="url(#gH)"/><circle cx="199.6" cy="346.3" r="5.4" fill="url(#gH)"/><circle cx="248.5" cy="354.8" r="5.4" fill="url(#gH)"/><circle cx="205.3" cy="385.7" r="5.4" fill="url(#gH)"/><circle cx="315.1" cy="380.9" r="5.4" fill="url(#gH)"/><circle cx="328.0" cy="421.9" r="5.4" fill="url(#gH)"/><circle cx="147.0" cy="415.8" r="5.4" fill="url(#gH)"/><circle cx="160.4" cy="456.9" r="5.4" fill="url(#gH)"/><circle cx="269.8" cy="451.6" r="5.4" fill="url(#gH)"/><circle cx="226.6" cy="482.6" r="5.4" fill="url(#gH)"/><circle cx="275.5" cy="491.2" r="5.4" fill="url(#gH)"/><rect x="223.5" y="405.5" width="27" height="27" fill="none" stroke="#ffff00" stroke-width="1"/><path d="M235 405.5H242M250.5 413.5V423.5" stroke="#ff00ff" stroke-width="1" fill="none"/><path d="M233 432.5H240" stroke="#ff8080" stroke-width="1"/><path d="M88.5 196.5V170M88.5 196.5H116" stroke="#c8c8c8" stroke-width="1"/><path d="M88.5 158L85 171H92Z" fill="#e8e8e8"/><path d="M126 196.5L114.5 192.5V200.5Z" fill="#e8e8e8"/><rect x="406.5" y="584" width="35" height="112" fill="#000" stroke="#808080" stroke-width="2"/><circle cx="416" cy="595" r="8.7" fill="url(#gAs)"/><circle cx="416" cy="617.6" r="8.7" fill="url(#gO)"/><circle cx="416" cy="640.7" r="8.7" fill="url(#gH)"/><circle cx="416" cy="663.7" r="8.7" fill="url(#gC)"/><circle cx="416" cy="686.3" r="8.7" fill="url(#gN)"/></svg>
<div class="t" style="left:84px;top:142px;font-size:11.5px;color:#e8e8e8;font-weight:normal;letter-spacing:0px;">b</div>
<div class="t" style="left:133px;top:189px;font-size:11.5px;color:#e8e8e8;font-weight:normal;letter-spacing:0px;">a</div>
<div class="t" style="left:425px;top:588px;font-size:11.5px;color:#fff;font-weight:normal;letter-spacing:-0.3px;">As</div>
<div class="t" style="left:425px;top:611px;font-size:11.5px;color:#fff;font-weight:normal;letter-spacing:-0.3px;">O</div>
<div class="t" style="left:425px;top:634px;font-size:11.5px;color:#fff;font-weight:normal;letter-spacing:-0.3px;">H</div>
<div class="t" style="left:425px;top:657px;font-size:11.5px;color:#fff;font-weight:normal;letter-spacing:-0.3px;">Co</div>
<div class="t" style="left:425px;top:679px;font-size:11.5px;color:#fff;font-weight:normal;letter-spacing:-0.3px;">N</div>
<div class="a" style="left:448px;top:139px;width:658px;height:267px;background:#fff;border:1px solid #a0a0a0;border-bottom:none"></div>
<div class="a" style="left:449px;top:140px;width:656px;height:1px;background:#fff;"></div>
<div class="a" style="left:449px;top:140px;width:1px;height:266px;background:#fff;"></div>
<div class="a" style="left:450px;top:141px;width:655px;height:24px;background:#f0f0f0;border-bottom:1px solid #a0a0a0"></div>
<div class="t" style="left:456px;top:146px;font-size:12px;color:#1e1e1e;font-weight:normal;letter-spacing:-0.3px;">Table of created atoms</div>
<svg style="left:581px;top:155px;" width="6" height="3" viewBox="0 0 6 3"><path d="M0 0L6 0L3 3Z" fill="#a0a0a0"/></svg>
<svg style="left:1090px;top:148px;" width="10" height="9" viewBox="0 0 10 9"><path d="M1 1L9 8M9 1L1 8" stroke="#6d6d6d" stroke-width="2.3"/></svg>
<div class="t" style="left:455px;top:170px;font-size:12px;color:#000;font-weight:normal;letter-spacing:0px;">No.</div>
<div class="t" style="left:517px;top:170px;font-size:12px;color:#000;font-weight:normal;letter-spacing:0px;">Atom</div>
<div class="t" style="left:582px;top:170px;font-size:12px;color:#000;font-weight:normal;letter-spacing:0px;">Symmetry</div>
<div class="t" style="left:710px;top:170px;font-size:12px;color:#000;font-weight:normal;letter-spacing:0px;">Atom info</div>
<div class="t" style="left:869px;top:170px;font-size:12px;color:#000;font-weight:normal;letter-spacing:0px;">xc</div>
<div class="t" style="left:945px;top:170px;font-size:12px;color:#000;font-weight:normal;letter-spacing:0px;">yc</div>
<div class="t" style="left:1021px;top:170px;font-size:12px;color:#000;font-weight:normal;letter-spacing:0px;">zc</div>
<div class="a" style="left:511px;top:165px;width:1px;height:223px;background:#f0f0f0;"></div>
<div class="a" style="left:576px;top:165px;width:1px;height:223px;background:#f0f0f0;"></div>
<div class="a" style="left:704px;top:165px;width:1px;height:223px;background:#f0f0f0;"></div>
<div class="a" style="left:863px;top:165px;width:1px;height:223px;background:#f0f0f0;"></div>
<div class="a" style="left:939px;top:165px;width:1px;height:223px;background:#f0f0f0;"></div>
<div class="a" style="left:1015px;top:165px;width:1px;height:223px;background:#f0f0f0;"></div>
<svg style="left:486px;top:173px;" width="4" height="8" viewBox="0 0 4 8"><path d="M0.5 7.5L3.5 0.5" stroke="#8a8a8a" stroke-width="1"/></svg>
<div class="a" style="left:450px;top:165px;width:640px;height:224px;overflow:hidden">
<div class="a" style="left:3px;top:24px;width:58px;height:18px;background:#0078d7"></div>
<div class="a" style="left:62px;top:24px;width:64px;height:18px;background:#0078d7"></div>
<div class="a" style="left:127px;top:24px;width:127px;height:18px;background:#0078d7"></div>
<div class="a" style="left:255px;top:24px;width:158px;height:18px;background:#0078d7"></div>
<div class="a" style="left:414px;top:24px;width:75px;height:18px;background:#0078d7"></div>
<div class="a" style="left:490px;top:24px;width:75px;height:18px;background:#0078d7"></div>
<div class="a" style="left:566px;top:24px;width:74px;height:18px;background:#0078d7"></div>
<div class="a" style="left:3px;top:42px;width:637px;height:1px;background:#f0f0f0"></div>
<div class="t" style="left:5px;top:27px;font-size:12px;letter-spacing:-0.05px;color:#fff">5</div>
<div class="t" style="left:67px;top:27px;font-size:12px;letter-spacing:-0.05px;color:#fff">Co1</div>
<div class="t" style="left:132px;top:27px;font-size:12px;letter-spacing:-0.05px;color:#fff">x, y, z</div>
<div class="t" style="left:260px;top:27px;font-size:12px;letter-spacing:-0.05px;color:#fff">"Co1"</div>
<div class="t" style="left:421px;top:27px;font-size:12px;letter-spacing:-0.4px;color:#fff">0.25000</div>
<div class="t" style="left:497px;top:27px;font-size:12px;letter-spacing:-0.4px;color:#fff">0.25000</div>
<div class="t" style="left:573px;top:27px;font-size:12px;letter-spacing:-0.4px;color:#fff">0.20528</div>
<div class="a" style="left:3px;top:61px;width:637px;height:1px;background:#f0f0f0"></div>
<div class="t" style="left:5px;top:46px;font-size:12px;letter-spacing:-0.05px;color:#000">6</div>
<div class="t" style="left:67px;top:46px;font-size:12px;letter-spacing:-0.05px;color:#000">N11</div>
<div class="t" style="left:132px;top:46px;font-size:12px;letter-spacing:-0.05px;color:#000">x, y, z</div>
<div class="t" style="left:260px;top:46px;font-size:12px;letter-spacing:-0.05px;color:#000">"N11"</div>
<div class="t" style="left:421px;top:46px;font-size:12px;letter-spacing:-0.4px;color:#000">0.18223</div>
<div class="t" style="left:497px;top:46px;font-size:12px;letter-spacing:-0.4px;color:#000">0.20380</div>
<div class="t" style="left:573px;top:46px;font-size:12px;letter-spacing:-0.4px;color:#000">0.20526</div>
<div class="a" style="left:3px;top:80px;width:637px;height:1px;background:#f0f0f0"></div>
<div class="t" style="left:5px;top:65px;font-size:12px;letter-spacing:-0.05px;color:#000">7</div>
<div class="t" style="left:67px;top:65px;font-size:12px;letter-spacing:-0.05px;color:#000">N11</div>
<div class="t" style="left:132px;top:65px;font-size:12px;letter-spacing:-0.05px;color:#000">1/2-x, 1/2-y, z</div>
<div class="t" style="left:260px;top:65px;font-size:12px;letter-spacing:-0.05px;color:#000">"N11" (1/2-x, 1/2-y, z)</div>
<div class="t" style="left:421px;top:65px;font-size:12px;letter-spacing:-0.4px;color:#000">0.31777</div>
<div class="t" style="left:497px;top:65px;font-size:12px;letter-spacing:-0.4px;color:#000">0.29620</div>
<div class="t" style="left:573px;top:65px;font-size:12px;letter-spacing:-0.4px;color:#000">0.20526</div>
<div class="a" style="left:3px;top:99px;width:637px;height:1px;background:#f0f0f0"></div>
<div class="t" style="left:5px;top:84px;font-size:12px;letter-spacing:-0.05px;color:#000">8</div>
<div class="t" style="left:67px;top:84px;font-size:12px;letter-spacing:-0.05px;color:#000">N12</div>
<div class="t" style="left:132px;top:84px;font-size:12px;letter-spacing:-0.05px;color:#000">x, y, z</div>
<div class="t" style="left:260px;top:84px;font-size:12px;letter-spacing:-0.05px;color:#000">"N12"</div>
<div class="t" style="left:421px;top:84px;font-size:12px;letter-spacing:-0.4px;color:#000">0.23381</div>
<div class="t" style="left:497px;top:84px;font-size:12px;letter-spacing:-0.4px;color:#000">0.34957</div>
<div class="t" style="left:573px;top:84px;font-size:12px;letter-spacing:-0.4px;color:#000">0.30192</div>
<div class="a" style="left:3px;top:118px;width:637px;height:1px;background:#f0f0f0"></div>
<div class="t" style="left:5px;top:103px;font-size:12px;letter-spacing:-0.05px;color:#000">9</div>
<div class="t" style="left:67px;top:103px;font-size:12px;letter-spacing:-0.05px;color:#000">N12</div>
<div class="t" style="left:132px;top:103px;font-size:12px;letter-spacing:-0.05px;color:#000">1/2-x, 1/2-y, z</div>
<div class="t" style="left:260px;top:103px;font-size:12px;letter-spacing:-0.05px;color:#000">"N12" (1/2-x, 1/2-y, z)</div>
<div class="t" style="left:421px;top:103px;font-size:12px;letter-spacing:-0.4px;color:#000">0.26619</div>
<div class="t" style="left:497px;top:103px;font-size:12px;letter-spacing:-0.4px;color:#000">0.15043</div>
<div class="t" style="left:573px;top:103px;font-size:12px;letter-spacing:-0.4px;color:#000">0.30192</div>
<div class="a" style="left:3px;top:137px;width:637px;height:1px;background:#f0f0f0"></div>
<div class="t" style="left:5px;top:122px;font-size:12px;letter-spacing:-0.05px;color:#000">10</div>
<div class="t" style="left:67px;top:122px;font-size:12px;letter-spacing:-0.05px;color:#000">N13</div>
<div class="t" style="left:132px;top:122px;font-size:12px;letter-spacing:-0.05px;color:#000">x, y, z</div>
<div class="t" style="left:260px;top:122px;font-size:12px;letter-spacing:-0.05px;color:#000">"N13"</div>
<div class="t" style="left:421px;top:122px;font-size:12px;letter-spacing:-0.4px;color:#000">0.23285</div>
<div class="t" style="left:497px;top:122px;font-size:12px;letter-spacing:-0.4px;color:#000">0.34732</div>
<div class="t" style="left:573px;top:122px;font-size:12px;letter-spacing:-0.4px;color:#000">0.10891</div>
<div class="a" style="left:3px;top:156px;width:637px;height:1px;background:#f0f0f0"></div>
<div class="t" style="left:5px;top:141px;font-size:12px;letter-spacing:-0.05px;color:#000">11</div>
<div class="t" style="left:67px;top:141px;font-size:12px;letter-spacing:-0.05px;color:#000">N13</div>
<div class="t" style="left:132px;top:141px;font-size:12px;letter-spacing:-0.05px;color:#000">1/2-x, 1/2-y, z</div>
<div class="t" style="left:260px;top:141px;font-size:12px;letter-spacing:-0.05px;color:#000">"N13" (1/2-x, 1/2-y, z)</div>
<div class="t" style="left:421px;top:141px;font-size:12px;letter-spacing:-0.4px;color:#000">0.26715</div>
<div class="t" style="left:497px;top:141px;font-size:12px;letter-spacing:-0.4px;color:#000">0.15268</div>
<div class="t" style="left:573px;top:141px;font-size:12px;letter-spacing:-0.4px;color:#000">0.10891</div>
<div class="a" style="left:3px;top:175px;width:637px;height:1px;background:#f0f0f0"></div>
<div class="t" style="left:5px;top:160px;font-size:12px;letter-spacing:-0.05px;color:#000">12</div>
<div class="t" style="left:67px;top:160px;font-size:12px;letter-spacing:-0.05px;color:#000">H111</div>
<div class="t" style="left:132px;top:160px;font-size:12px;letter-spacing:-0.05px;color:#000">x, y, z</div>
<div class="t" style="left:260px;top:160px;font-size:12px;letter-spacing:-0.05px;color:#000">"H111"</div>
<div class="t" style="left:421px;top:160px;font-size:12px;letter-spacing:-0.4px;color:#000">0.16260</div>
<div class="t" style="left:497px;top:160px;font-size:12px;letter-spacing:-0.4px;color:#000">0.25680</div>
<div class="t" style="left:573px;top:160px;font-size:12px;letter-spacing:-0.4px;color:#000">0.19770</div>
<div class="a" style="left:3px;top:194px;width:637px;height:1px;background:#f0f0f0"></div>
<div class="t" style="left:5px;top:179px;font-size:12px;letter-spacing:-0.05px;color:#000">13</div>
<div class="t" style="left:67px;top:179px;font-size:12px;letter-spacing:-0.05px;color:#000">H112</div>
<div class="t" style="left:132px;top:179px;font-size:12px;letter-spacing:-0.05px;color:#000">x, y, z</div>
<div class="t" style="left:260px;top:179px;font-size:12px;letter-spacing:-0.05px;color:#000">"H112"</div>
<div class="t" style="left:421px;top:179px;font-size:12px;letter-spacing:-0.4px;color:#000">0.17560</div>
<div class="t" style="left:497px;top:179px;font-size:12px;letter-spacing:-0.4px;color:#000">0.17370</div>
<div class="t" style="left:573px;top:179px;font-size:12px;letter-spacing:-0.4px;color:#000">0.25880</div>
<div class="a" style="left:3px;top:213px;width:637px;height:1px;background:#f0f0f0"></div>
<div class="t" style="left:5px;top:198px;font-size:12px;letter-spacing:-0.05px;color:#000">14</div>
<div class="t" style="left:67px;top:198px;font-size:12px;letter-spacing:-0.05px;color:#000">H113</div>
<div class="t" style="left:132px;top:198px;font-size:12px;letter-spacing:-0.05px;color:#000">x, y, z</div>
<div class="t" style="left:260px;top:198px;font-size:12px;letter-spacing:-0.05px;color:#000">"H113"</div>
<div class="t" style="left:421px;top:198px;font-size:12px;letter-spacing:-0.4px;color:#000">0.17770</div>
<div class="t" style="left:497px;top:198px;font-size:12px;letter-spacing:-0.4px;color:#000">0.16010</div>
<div class="t" style="left:573px;top:198px;font-size:12px;letter-spacing:-0.4px;color:#000">0.15920</div>
<div class="a" style="left:3px;top:232px;width:637px;height:1px;background:#f0f0f0"></div>
<div class="t" style="left:5px;top:217px;font-size:12px;letter-spacing:-0.05px;color:#000">15</div>
<div class="t" style="left:67px;top:217px;font-size:12px;letter-spacing:-0.05px;color:#000">H111</div>
<div class="t" style="left:132px;top:217px;font-size:12px;letter-spacing:-0.05px;color:#000">1/2-x, 1/2-y, z</div>
<div class="t" style="left:260px;top:217px;font-size:12px;letter-spacing:-0.05px;color:#000">"H111" (1/2-x, 1/2-y, z)</div>
<div class="t" style="left:421px;top:217px;font-size:12px;letter-spacing:-0.4px;color:#000">0.33740</div>
<div class="t" style="left:497px;top:217px;font-size:12px;letter-spacing:-0.4px;color:#000">0.24320</div>
<div class="t" style="left:573px;top:217px;font-size:12px;letter-spacing:-0.4px;color:#000">0.19770</div>
</div>
<div class="a" style="left:1090px;top:165px;width:15px;height:224px;background:#f0f0f0;"></div>
<div class="a" style="left:1091px;top:182px;width:14px;height:76px;background:#cdcdcd;"></div>
<svg style="left:1093px;top:170px;" width="9" height="5" viewBox="0 0 9 5"><path d="M0.5 4.5L4.5 0.5L8.5 4.5" stroke="#606060" stroke-width="1.3" fill="none"/></svg>
<svg style="left:1093px;top:378px;" width="9" height="5" viewBox="0 0 9 5"><path d="M0.5 0.5L4.5 4.5L8.5 0.5" stroke="#606060" stroke-width="1.3" fill="none"/></svg>
<div class="a" style="left:449px;top:390px;width:641px;height:16px;background:#f0f0f0;"></div>
<div class="a" style="left:466px;top:391px;width:503px;height:14px;background:#cdcdcd;"></div>
<svg style="left:454px;top:394px;" width="5" height="9" viewBox="0 0 5 9"><path d="M4.5 0.5L0.5 4.5L4.5 8.5" stroke="#606060" stroke-width="1.3" fill="none"/></svg>
<svg style="left:1078px;top:394px;" width="5" height="9" viewBox="0 0 5 9"><path d="M0.5 0.5L4.5 4.5L0.5 8.5" stroke="#606060" stroke-width="1.3" fill="none"/></svg>
<div class="a" style="left:448px;top:411px;width:658px;height:288px;background:#fff;border:1px solid #a0a0a0;border-bottom:none"></div>
<div class="a" style="left:449px;top:412px;width:656px;height:18px;background:#f0f0f0;border-top:1px solid #fff;border-left:1px solid #fff"></div>
<div class="a" style="left:449px;top:430px;width:656px;height:1px;background:#a0a0a0;"></div>
<div class="t" style="left:456px;top:415px;font-size:12px;color:#1e1e1e;font-weight:normal;letter-spacing:-0.3px;">Properties</div>
<svg style="left:1090px;top:417px;" width="10" height="9" viewBox="0 0 10 9"><path d="M1 1L9 8M9 1L1 8" stroke="#6d6d6d" stroke-width="2.3"/></svg>
<div class="a" style="left:450px;top:431px;width:655px;height:26px;background:#f0f0f0;"></div>
<div class="a" style="left:451px;top:433px;width:653px;height:22px;background:#fff;border:1px solid #7a7a7a"></div>
<div class="t" style="left:456px;top:437px;font-size:11px;color:#000;font-weight:normal;letter-spacing:-0.2px;">Object info</div>
<svg style="left:1090px;top:441px;" width="9" height="5" viewBox="0 0 9 5"><path d="M0.5 0.5L4.5 4.5L8.5 0.5" stroke="#404040" stroke-width="1.1" fill="none"/></svg>
<div class="a" style="left:1105px;top:431px;width:1px;height:268px;background:#f0f0f0;"></div>
<div class="a" style="left:647px;top:457px;width:1px;height:242px;background:#f0f0f0;"></div>
<div class="a" style="left:861px;top:457px;width:1px;height:242px;background:#f0f0f0;"></div>
<div class="t" style="left:455px;top:484px;font-size:12px;color:#000;font-weight:normal;letter-spacing:0.08px;">Atom number</div>
<div class="t" style="left:652px;top:484px;font-size:12px;color:#000;font-weight:normal;letter-spacing:-0.35px;">#5</div>
<div class="a" style="left:450px;top:499px;width:655px;height:1px;background:#f0f0f0;"></div>
<div class="t" style="left:455px;top:503px;font-size:12px;color:#000;font-weight:normal;letter-spacing:0.08px;">Atom (site) symbol</div>
<div class="t" style="left:652px;top:503px;font-size:12px;color:#000;font-weight:normal;letter-spacing:-0.35px;">"Co1"</div>
<div class="a" style="left:450px;top:518px;width:655px;height:1px;background:#f0f0f0;"></div>
<div class="t" style="left:455px;top:522px;font-size:12px;color:#000;font-weight:normal;letter-spacing:0.08px;">Chemical composition</div>
<div class="t" style="left:652px;top:522px;font-size:12px;color:#000;font-weight:normal;letter-spacing:0.05px;">Co</div>
<div class="a" style="left:450px;top:537px;width:655px;height:1px;background:#f0f0f0;"></div>
<div class="t" style="left:455px;top:541px;font-size:12px;color:#000;font-weight:normal;letter-spacing:0.08px;">Atom group</div>
<div class="t" style="left:652px;top:541px;font-size:12px;color:#000;font-weight:normal;letter-spacing:0.05px;">Co</div>
<div class="a" style="left:450px;top:556px;width:655px;height:1px;background:#f0f0f0;"></div>
<div class="t" style="left:455px;top:560px;font-size:12px;color:#000;font-weight:normal;letter-spacing:0.08px;">Original coordinates</div>
<div class="t" style="left:652px;top:560px;font-size:12px;color:#000;font-weight:normal;letter-spacing:-0.35px;">1/4, 1/4, 0.20528(3)</div>
<div class="a" style="left:450px;top:575px;width:655px;height:1px;background:#f0f0f0;"></div>
<div class="t" style="left:455px;top:579px;font-size:12px;color:#000;font-weight:normal;letter-spacing:0.08px;">Symm. op. (atom code)</div>
<div class="t" style="left:652px;top:579px;font-size:12px;color:#000;font-weight:normal;letter-spacing:-0.35px;">x, y, z (19555011)</div>
<div class="a" style="left:450px;top:594px;width:655px;height:1px;background:#f0f0f0;"></div>
<div class="t" style="left:455px;top:598px;font-size:12px;color:#000;font-weight:normal;letter-spacing:0.08px;">Crystal coordinates</div>
<div class="t" style="left:652px;top:598px;font-size:12px;color:#000;font-weight:normal;letter-spacing:-0.35px;">1/4, 1/4, 0.20528(3)</div>
<div class="a" style="left:450px;top:613px;width:655px;height:1px;background:#f0f0f0;"></div>
<div class="t" style="left:455px;top:617px;font-size:12px;color:#000;font-weight:normal;letter-spacing:0.08px;">Orthogonal coordinates</div>
<div class="t" style="left:652px;top:617px;font-size:12px;color:#000;font-weight:normal;letter-spacing:-0.35px;">6.8633(1), 3.2999(0), 2.9700(4)</div>
<div class="a" style="left:450px;top:632px;width:655px;height:1px;background:#f0f0f0;"></div>
<div class="t" style="left:455px;top:636px;font-size:12px;color:#000;font-weight:normal;letter-spacing:0.08px;">View coordinates</div>
<div class="t" style="left:652px;top:636px;font-size:12px;color:#000;font-weight:normal;letter-spacing:-0.35px;">6.8633(1), 3.2999(0), 2.9700(4)</div>
<div class="a" style="left:450px;top:651px;width:655px;height:1px;background:#f0f0f0;"></div>
<div class="t" style="left:455px;top:655px;font-size:12px;color:#000;font-weight:normal;letter-spacing:0.08px;">Number of bonds</div>
<div class="t" style="left:652px;top:655px;font-size:12px;color:#000;font-weight:normal;letter-spacing:-0.35px;">6</div>
<div class="a" style="left:450px;top:670px;width:655px;height:1px;background:#f0f0f0;"></div>
<div class="t" style="left:455px;top:674px;font-size:12px;color:#000;font-weight:normal;letter-spacing:0.08px;">Disorder part</div>
<div class="t" style="left:652px;top:674px;font-size:12px;color:#000;font-weight:normal;letter-spacing:0.05px;"></div>
<div class="a" style="left:0px;top:699px;width:1109px;height:27px;background:#e2e6ef;"></div>
<div class="a" style="left:2px;top:701px;width:763px;height:24px;background:#d0d6e5;"></div>
<div class="a" style="left:767px;top:701px;width:254px;height:24px;background:#d0d6e5;"></div>
<div class="a" style="left:1023px;top:701px;width:84px;height:24px;background:#d0d6e5;"></div>
<svg style="left:11px;top:705px;" width="6" height="20" viewBox="0 0 6 20"><rect x="1" y="1" width="1" height="1" fill="#e8ebf2"/><rect x="0" y="0" width="1" height="1" fill="#5b6d8a"/><rect x="5" y="1" width="1" height="1" fill="#e8ebf2"/><rect x="4" y="0" width="1" height="1" fill="#5b6d8a"/><rect x="3" y="3" width="1" height="1" fill="#e8ebf2"/><rect x="2" y="2" width="1" height="1" fill="#5b6d8a"/><rect x="1" y="5" width="1" height="1" fill="#e8ebf2"/><rect x="0" y="4" width="1" height="1" fill="#5b6d8a"/><rect x="5" y="5" width="1" height="1" fill="#e8ebf2"/><rect x="4" y="4" width="1" height="1" fill="#5b6d8a"/><rect x="3" y="7" width="1" height="1" fill="#e8ebf2"/><rect x="2" y="6" width="1" height="1" fill="#5b6d8a"/><rect x="1" y="9" width="1" height="1" fill="#e8ebf2"/><rect x="0" y="8" width="1" height="1" fill="#5b6d8a"/><rect x="5" y="9" width="1" height="1" fill="#e8ebf2"/><rect x="4" y="8" width="1" height="1" fill="#5b6d8a"/><rect x="3" y="11" width="1" height="1" fill="#e8ebf2"/><rect x="2" y="10" width="1" height="1" fill="#5b6d8a"/><rect x="1" y="13" width="1" height="1" fill="#e8ebf2"/><rect x="0" y="12" width="1" height="1" fill="#5b6d8a"/><rect x="5" y="13" width="1" height="1" fill="#e8ebf2"/><rect x="4" y="12" width="1" height="1" fill="#5b6d8a"/><rect x="3" y="15" width="1" height="1" fill="#e8ebf2"/><rect x="2" y="14" width="1" height="1" fill="#5b6d8a"/><rect x="1" y="17" width="1" height="1" fill="#e8ebf2"/><rect x="0" y="16" width="1" height="1" fill="#5b6d8a"/><rect x="5" y="17" width="1" height="1" fill="#e8ebf2"/><rect x="4" y="16" width="1" height="1" fill="#5b6d8a"/></svg>
<svg style="left:26px;top:706px;" width="16" height="16" viewBox="0 0 16 16"><rect x="0.5" y="0.5" width="15" height="14" fill="#fff" stroke="#3040a0"/><rect x="1" y="1" width="6" height="13" fill="#b8d0f0"/><rect x="7" y="1" width="8" height="2" fill="#a0a0a0"/><rect x="1" y="1" width="6" height="1.5" fill="#2030a0"/><path d="M4 8Q6 4 11 6M12 10Q10 14 5 12" stroke="#b09040" stroke-width="2" fill="none"/><path d="M10 4L13 6L10 8Z M6 10L3 12L6 14Z" fill="#b09040"/></svg>
<svg style="left:48px;top:706px;" width="16" height="16" viewBox="0 0 16 16"><rect x="0.5" y="0.5" width="13" height="11" fill="#fff" stroke="#000"/><rect x="1" y="1" width="12" height="2" fill="#1a1a80"/><path d="M3 5.5H10M3 7.5H8M3 9.5H8" stroke="#404040"/><path d="M7 10H12V7.5L16 11.5L12 15.5V13H7Z" fill="#30e0f0" stroke="#000" stroke-width="0.7"/></svg>
<svg style="left:70px;top:706px;" width="16" height="16" viewBox="0 0 16 16"><circle cx="2.3" cy="8.5" r="2.2" fill="#f8f000" stroke="#000" stroke-width="0.9"/><circle cx="2.3" cy="13.8" r="2.2" fill="#f8f000" stroke="#000" stroke-width="0.9"/><circle cx="6" cy="11.2" r="2" fill="#a09800" stroke="#000" stroke-width="0.9"/><path d="M5.5 3L15 12.5" stroke="#000" stroke-width="2.6"/><path d="M5.5 3L15 12.5" stroke="#1a1a90" stroke-width="1.3"/><path d="M5.5 3L8.5 6" stroke="#f8f000" stroke-width="1.4"/><path d="M10.5 0V3M9 1.5H12M13.5 2V5M12 3.5H15" stroke="#000" stroke-width="1"/><rect x="0" y="0" width="1" height="1" fill="#000"/></svg>
<svg style="left:92px;top:706px;" width="16" height="16" viewBox="0 0 16 16"><rect x="4.5" y="0.5" width="12" height="12" fill="#fff" stroke="#909090"/><path d="M0.8 15.2L7 9" stroke="#000" stroke-width="2.2"/><path d="M0.8 15.2L7 9" stroke="#c00000" stroke-width="0.9" stroke-dasharray="1 1"/><path d="M4 4L6 3H8.5L13 7.5L11.5 9.5L9 8L7.5 8.5Z" fill="#f8f000" stroke="#000" stroke-width="0.8"/></svg>
<svg style="left:130px;top:706px;" width="16" height="16" viewBox="0 0 16 16"><path d="M0 1H4L8 5L12 1H16L11 8L16 15H12L8 11L4 15H0L5 8Z" fill="#000"/><circle cx="8" cy="8" r="5" fill="#f020f0"/><circle cx="8" cy="8" r="2.8" fill="#f8f000"/></svg>
<svg style="left:160px;top:706px;" width="16" height="16" viewBox="0 0 16 16"><path d="M1 7L6 2L14 9L9 14Z" fill="#fff" stroke="#000" stroke-width="1.2" stroke-linejoin="round"/><path d="M3.5 9.2L6.5 6.3L12.5 11.5L9.5 14.3Z" fill="#f8f000"/><path d="M6 2L14 9L12 11L4 4Z" fill="#a8a8a8"/><path d="M1 7V11" stroke="#000" stroke-width="1.2"/></svg>
<svg style="left:181px;top:706px;" width="16" height="16" viewBox="0 0 16 16"><circle cx="4.5" cy="11.5" r="3.3" fill="#f8f000" stroke="#000" stroke-width="1.1"/><circle cx="11.5" cy="11.5" r="3.3" fill="#f8f000" stroke="#000" stroke-width="1.1"/><circle cx="11.5" cy="4.5" r="3.3" fill="#f8f000" stroke="#000" stroke-width="1.1"/><path d="M0 4.5H7M3.5 1V8" stroke="#000" stroke-width="1.6"/></svg>
<svg style="left:203px;top:706px;" width="16" height="16" viewBox="0 0 16 16"><path d="M0 8H6M3 5V11" stroke="#000" stroke-width="1.8"/><path d="M6 8H9" stroke="#000" stroke-width="1.5"/><circle cx="12" cy="8" r="3.6" fill="#f8f000" stroke="#000"/></svg>
<svg style="left:225px;top:706px;" width="16" height="16" viewBox="0 0 16 16"><path d="M5 4Q5 0 8.5 0Q12 0 12 3Q12 5 9 6V8" stroke="#000" stroke-width="1.6" fill="none"/><circle cx="9" cy="10" r="0.8" fill="#000"/><circle cx="3" cy="13" r="2.3" fill="#fff" stroke="#000"/><circle cx="13" cy="13" r="2.3" fill="#fff" stroke="#000"/></svg>
<svg style="left:247px;top:706px;" width="16" height="16" viewBox="0 0 16 16"><rect x="3" y="3" width="10" height="10" fill="none" stroke="#1a30f0" stroke-width="1.1"/><path d="M3 3L13 13M13 3L3 13" stroke="#1a30f0"/><circle cx="2.5" cy="2.5" r="2.2" fill="#fff" stroke="#000"/><circle cx="13.5" cy="2.5" r="2.2" fill="#fff" stroke="#000"/><circle cx="2.5" cy="13.5" r="2.2" fill="#fff" stroke="#000"/><circle cx="13.5" cy="13.5" r="2.2" fill="#fff" stroke="#000"/></svg>
<svg style="left:269px;top:706px;" width="16" height="16" viewBox="0 0 16 16"><path d="M6 0H10V5H13L8 10L3 5H6Z" fill="#fff" stroke="#000"/><circle cx="4" cy="12.5" r="2.7" fill="#fff" stroke="#000"/><circle cx="12" cy="12.5" r="2.7" fill="#fff" stroke="#000"/></svg>
<svg style="left:291px;top:706px;" width="16" height="16" viewBox="0 0 16 16"><circle cx="8" cy="8" r="7" fill="none" stroke="#000" stroke-dasharray="1 1.2"/><circle cx="8" cy="8" r="4.2" fill="#808020" stroke="#000"/></svg>
<svg style="left:330px;top:706px;" width="16" height="16" viewBox="0 0 16 16"><path d="M4 2H12L15.5 8L12 14H4L0.5 8Z" fill="none" stroke="#1a20f0" stroke-width="1.6"/></svg>
<svg style="left:352px;top:706px;" width="16" height="16" viewBox="0 0 16 16"><path d="M8 14H4L0.5 8L4 2H8" fill="none" stroke="#1a20f0" stroke-width="1.6"/><path d="M8 2H12L15.5 8L12 14H8" fill="none" stroke="#f8f000" stroke-width="1.6"/></svg>
<svg style="left:373px;top:706px;" width="16" height="16" viewBox="0 0 16 16"><path d="M3 5L7 2L12 5V10L7 13L3 10Z" fill="none" stroke="#707070" stroke-width="1.2"/><path d="M5 3H11L14 6L11 9H5L2 6Z" fill="none" stroke="#1a40e0" stroke-width="1.2"/><path d="M5 8H11L14 11.5L11 15H5L2 11.5Z" fill="none" stroke="#1a40e0" stroke-width="1.2"/></svg>
<svg style="left:396px;top:706px;" width="16" height="16" viewBox="0 0 16 16"><path d="M3.5 3.5L0.5 0.5M3.5 3.5L0.5 6.5M3.5 3.5L6.5 0.5M11.5 3.5L8.5 0.5M11.5 3.5L14.5 0.5M11.5 3.5L14.5 6.5M3.5 11.5L0.5 8.5M3.5 11.5L0.5 14.5M3.5 11.5L6.5 14.5M11.5 11.5L8.5 14.5M11.5 11.5L14.5 8.5M11.5 11.5L14.5 14.5" stroke="#1020f0" stroke-width="1.5"/><path d="M3.5 3.5L11.5 11.5M11.5 3.5L3.5 11.5" stroke="#000" stroke-width="1.6"/><rect x="2.5" y="2.5" width="2" height="2" fill="#000"/><rect x="10.5" y="2.5" width="2" height="2" fill="#000"/><rect x="2.5" y="10.5" width="2" height="2" fill="#000"/><rect x="10.5" y="10.5" width="2" height="2" fill="#000"/></svg>
<svg style="left:418px;top:706px;" width="16" height="16" viewBox="0 0 16 16"><path d="M3.5 3.5L0.5 0.5M3.5 3.5L0.5 6.5M3.5 3.5L6.5 0.5M11.5 3.5L8.5 0.5M11.5 3.5L14.5 0.5M11.5 3.5L14.5 6.5M3.5 11.5L0.5 8.5M3.5 11.5L0.5 14.5M3.5 11.5L6.5 14.5M11.5 11.5L8.5 14.5M11.5 11.5L14.5 8.5M11.5 11.5L14.5 14.5" stroke="#d01000" stroke-width="1.5"/><path d="M3.5 3.5L11.5 11.5M11.5 3.5L3.5 11.5" stroke="#000" stroke-width="1.6"/><rect x="2.5" y="2.5" width="2" height="2" fill="#000"/><rect x="10.5" y="2.5" width="2" height="2" fill="#000"/><rect x="2.5" y="10.5" width="2" height="2" fill="#000"/><rect x="10.5" y="10.5" width="2" height="2" fill="#000"/></svg>
<svg style="left:446px;top:706px;" width="16" height="16" viewBox="0 0 16 16"><path d="M4 12L12 4" stroke="#1a40c0" stroke-width="1.6"/><circle cx="4" cy="12" r="3.2" fill="#a8c8f0" stroke="#000" stroke-width="0.8"/><circle cx="12.5" cy="3.5" r="3.2" fill="#f8f000" stroke="#000" stroke-width="0.8"/></svg>
<svg style="left:468px;top:706px;" width="16" height="16" viewBox="0 0 16 16"><path d="M4 8L6 4.5H10L12 8L10 11.5H6Z" fill="none" stroke="#000" stroke-width="1.2"/><path d="M6 4.5L3 1.5M10 4.5L13 1.5M6 11.5L3 14.5M10 11.5L13 14.5" stroke="#1a30f0" stroke-width="1.2"/><rect x="0" y="0" width="3" height="2" fill="#f8f000"/><rect x="13" y="0" width="3" height="2" fill="#f8f000"/><rect x="0" y="14" width="3" height="2" fill="#f8f000"/><rect x="13" y="14" width="3" height="2" fill="#f8f000"/></svg>
<svg style="left:490px;top:706px;" width="16" height="16" viewBox="0 0 16 16"><path d="M6 1H12L14 4L12 7H6L4 4Z" fill="none" stroke="#f8e000" stroke-width="1.2"/><path d="M3 9H9L11 12L9 15H3L1 12Z" fill="none" stroke="#000" stroke-width="1.2"/></svg>
<svg style="left:512px;top:706px;" width="16" height="16" viewBox="0 0 16 16"><path d="M6 1H12L14 4L12 7H6L4 4Z" fill="none" stroke="#e02010" stroke-width="1.4"/><path d="M3 9H9L11 12L9 15H3L1 12Z" fill="none" stroke="#000" stroke-width="1.2"/></svg>
<svg style="left:540px;top:706px;" width="16" height="16" viewBox="0 0 16 16"><rect x="0.5" y="0.5" width="12" height="12" fill="none" stroke="#1a30f0" stroke-width="1"/><rect x="3.5" y="3.5" width="12" height="11" fill="none" stroke="#000" stroke-width="1.2"/><path d="M0.5 0.5L3.5 3.5M12.5 0.5L15.5 3.5M0.5 12.5L3.5 14.5M12.5 12.5L15.5 14.5" stroke="#1a30f0"/></svg>
<svg style="left:563px;top:706px;" width="16" height="16" viewBox="0 0 16 16"><path d="M8 0.5L15.5 8L8 15.5L0.5 8Z" fill="#f8f000" stroke="#000" stroke-width="1.1"/><path d="M0.5 8H15.5M8 0.5V8" stroke="#000" stroke-width="0.8"/></svg>
<svg style="left:584px;top:706px;" width="16" height="16" viewBox="0 0 16 16"><path d="M2.5 5H13M2.5 10H13M13 5V10" stroke="#1020f0" stroke-width="1.2"/><g fill="#f8f000" stroke="#000" stroke-width="0.9"><circle cx="2.5" cy="5" r="1.9"/><circle cx="8" cy="5" r="1.9"/><circle cx="13" cy="5" r="1.9"/><circle cx="2.5" cy="10.5" r="1.9"/><circle cx="8" cy="11" r="1.9"/><circle cx="13" cy="10.5" r="1.9"/></g><path d="M0.5 8L15.5 5M1.5 15L11 7M6 9L15 14" stroke="#f80000" stroke-width="2"/></svg>
<svg style="left:617px;top:706px;" width="16" height="16" viewBox="0 0 16 16"><circle cx="4.5" cy="11.5" r="3.2" fill="#f8f000" stroke="#000" stroke-width="1.1"/><text x="6" y="7.8" style="font-family:'Liberation Sans';font-weight:bold;font-size:9.5px" fill="#000">Fe</text></svg>
<svg style="left:645px;top:706px;" width="16" height="16" viewBox="0 0 16 16"><rect x="0.5" y="0.5" width="15" height="15" fill="#fff" stroke="#1a30f0" stroke-width="1.2"/><path d="M8 2V14M2 8H14" stroke="#000" stroke-width="1.5"/><path d="M8 1L5.5 4H10.5ZM8 15L5.5 12H10.5ZM1 8L4 5.5V10.5ZM15 8L12 5.5V10.5Z" fill="#000"/><circle cx="8" cy="8" r="1.8" fill="#f8f000"/></svg>
<svg style="left:684px;top:706px;" width="16" height="16" viewBox="0 0 16 16"><text x="0" y="14" font-family="Liberation Serif" font-weight="bold" font-style="italic" font-size="15" fill="#1a1a90">M</text></svg>
<svg style="left:706px;top:706px;" width="16" height="16" viewBox="0 0 16 16"><rect x="0.5" y="0.5" width="15" height="14" fill="#fff" stroke="#1a1a80"/><circle cx="6" cy="6.5" r="3.5" fill="none" stroke="#e02020"/><circle cx="9.5" cy="9" r="4" fill="#108880"/></svg>
<svg style="left:734px;top:706px;" width="16" height="16" viewBox="0 0 16 16"><path d="M4.5 1V15M11.5 1V15M1 4.5H15M1 11.5H15" stroke="#808080" stroke-width="1"/></svg>
<svg style="left:114px;top:712px;" width="5" height="3" viewBox="0 0 5 3"><path d="M0 0H5L2.5 3Z" fill="#505a70"/></svg>
<svg style="left:313px;top:712px;" width="5" height="3" viewBox="0 0 5 3"><path d="M0 0H5L2.5 3Z" fill="#505a70"/></svg>
<svg style="left:606px;top:712px;" width="5" height="3" viewBox="0 0 5 3"><path d="M0 0H5L2.5 3Z" fill="#505a70"/></svg>
<svg style="left:667px;top:712px;" width="5" height="3" viewBox="0 0 5 3"><path d="M0 0H5L2.5 3Z" fill="#505a70"/></svg>
<svg style="left:755px;top:716px;" width="7" height="4" viewBox="0 0 7 4"><path d="M0 0H7L3.5 4Z" fill="#303040"/></svg>
<div class="a" style="left:124px;top:704px;width:1px;height:20px;background:#8a94a8;"></div>
<div class="a" style="left:125px;top:704px;width:1px;height:20px;background:#f4f6fa;"></div>
<div class="a" style="left:152px;top:704px;width:1px;height:20px;background:#8a94a8;"></div>
<div class="a" style="left:153px;top:704px;width:1px;height:20px;background:#f4f6fa;"></div>
<div class="a" style="left:323px;top:704px;width:1px;height:20px;background:#8a94a8;"></div>
<div class="a" style="left:324px;top:704px;width:1px;height:20px;background:#f4f6fa;"></div>
<div class="a" style="left:439px;top:704px;width:1px;height:20px;background:#8a94a8;"></div>
<div class="a" style="left:440px;top:704px;width:1px;height:20px;background:#f4f6fa;"></div>
<div class="a" style="left:533px;top:704px;width:1px;height:20px;background:#8a94a8;"></div>
<div class="a" style="left:534px;top:704px;width:1px;height:20px;background:#f4f6fa;"></div>
<div class="a" style="left:638px;top:704px;width:1px;height:20px;background:#8a94a8;"></div>
<div class="a" style="left:639px;top:704px;width:1px;height:20px;background:#f4f6fa;"></div>
<div class="a" style="left:677px;top:704px;width:1px;height:20px;background:#8a94a8;"></div>
<div class="a" style="left:678px;top:704px;width:1px;height:20px;background:#f4f6fa;"></div>
<div class="a" style="left:727px;top:704px;width:1px;height:20px;background:#8a94a8;"></div>
<div class="a" style="left:728px;top:704px;width:1px;height:20px;background:#f4f6fa;"></div>
<svg style="left:776px;top:705px;" width="6" height="20" viewBox="0 0 6 20"><rect x="1" y="1" width="1" height="1" fill="#e8ebf2"/><rect x="0" y="0" width="1" height="1" fill="#5b6d8a"/><rect x="5" y="1" width="1" height="1" fill="#e8ebf2"/><rect x="4" y="0" width="1" height="1" fill="#5b6d8a"/><rect x="3" y="3" width="1" height="1" fill="#e8ebf2"/><rect x="2" y="2" width="1" height="1" fill="#5b6d8a"/><rect x="1" y="5" width="1" height="1" fill="#e8ebf2"/><rect x="0" y="4" width="1" height="1" fill="#5b6d8a"/><rect x="5" y="5" width="1" height="1" fill="#e8ebf2"/><rect x="4" y="4" width="1" height="1" fill="#5b6d8a"/><rect x="3" y="7" width="1" height="1" fill="#e8ebf2"/><rect x="2" y="6" width="1" height="1" fill="#5b6d8a"/><rect x="1" y="9" width="1" height="1" fill="#e8ebf2"/><rect x="0" y="8" width="1" height="1" fill="#5b6d8a"/><rect x="5" y="9" width="1" height="1" fill="#e8ebf2"/><rect x="4" y="8" width="1" height="1" fill="#5b6d8a"/><rect x="3" y="11" width="1" height="1" fill="#e8ebf2"/><rect x="2" y="10" width="1" height="1" fill="#5b6d8a"/><rect x="1" y="13" width="1" height="1" fill="#e8ebf2"/><rect x="0" y="12" width="1" height="1" fill="#5b6d8a"/><rect x="5" y="13" width="1" height="1" fill="#e8ebf2"/><rect x="4" y="12" width="1" height="1" fill="#5b6d8a"/><rect x="3" y="15" width="1" height="1" fill="#e8ebf2"/><rect x="2" y="14" width="1" height="1" fill="#5b6d8a"/><rect x="1" y="17" width="1" height="1" fill="#e8ebf2"/><rect x="0" y="16" width="1" height="1" fill="#5b6d8a"/><rect x="5" y="17" width="1" height="1" fill="#e8ebf2"/><rect x="4" y="16" width="1" height="1" fill="#5b6d8a"/></svg>
<div class="a" style="left:788px;top:702px;width:22px;height:22px;background:#fff3c8;border:1px solid #e5c365"></div>
<svg style="left:791px;top:706px;" width="16" height="16" viewBox="0 0 16 16"><path d="M4 1V14L7 11L9.5 16L11.5 15L9 10H13Z" fill="#fff" stroke="#000" stroke-width="1"/></svg>
<svg style="left:813px;top:706px;" width="16" height="16" viewBox="0 0 16 16"><path d="M8 1V15M1 8H15" stroke="#000" stroke-width="2"/><path d="M8 0L5 3.5H11ZM8 16L5 12.5H11ZM0 8L3.5 5V11ZM16 8L12.5 5V11Z" fill="#000"/><circle cx="8" cy="8" r="3.2" fill="none" stroke="#000" stroke-width="1.5"/></svg>
<svg style="left:835px;top:706px;" width="16" height="16" viewBox="0 0 16 16"><path d="M13 8A5 5 0 1 1 10 3.4" stroke="#000" stroke-width="2.2" fill="none"/><path d="M8 0L14 3L9 7Z" fill="#000"/></svg>
<svg style="left:857px;top:706px;" width="16" height="16" viewBox="0 0 16 16"><path d="M8 2V14M2 8H14" stroke="#000" stroke-width="2.2"/><path d="M8 0L4 4.5H12ZM8 16L4 11.5H12ZM0 8L4.5 4V12ZM16 8L11.5 4V12Z" fill="#000"/></svg>
<svg style="left:878px;top:706px;" width="16" height="16" viewBox="0 0 16 16"><path d="M1 5V1H5M11 1H15V5M15 11V15H11M5 15H1V11" stroke="#000" stroke-width="1.6" fill="none"/><path d="M2 2L5 5M14 2L11 5M2 14L5 11M14 14L11 11" stroke="#000" stroke-width="1.3"/><circle cx="8" cy="8" r="2.8" fill="none" stroke="#000" stroke-width="1.6"/></svg>
<svg style="left:900px;top:706px;" width="16" height="16" viewBox="0 0 16 16"><path d="M13 2L2 8L13 13" stroke="#000" stroke-width="2" fill="none"/><path d="M12 6V10" stroke="#000" stroke-width="1.5" stroke-dasharray="1.5 1"/></svg>
<svg style="left:922px;top:706px;" width="16" height="16" viewBox="0 0 16 16"><path d="M1 7L8 2L15 7M3 10H13M2 15H14M8 5V15M6 10L4 15M10 10L12 15" stroke="#000" stroke-width="1.6" fill="none"/></svg>
<svg style="left:945px;top:706px;" width="16" height="16" viewBox="0 0 16 16"><circle cx="8" cy="8" r="6" fill="none" stroke="#000" stroke-width="1.8" stroke-dasharray="1.8 1.4"/><circle cx="8" cy="8" r="2.8" fill="none" stroke="#000" stroke-width="1.6"/></svg>
<svg style="left:966px;top:706px;" width="16" height="16" viewBox="0 0 16 16"><circle cx="4.5" cy="4.5" r="3.6" fill="none" stroke="#000" stroke-width="1.6" stroke-dasharray="1.8 1.2"/><circle cx="4.5" cy="4.5" r="1.3" fill="#000"/><rect x="7" y="7" width="2.5" height="8" fill="#e8e8e0" stroke="#a0a0a0" stroke-width="0.6"/><rect x="11" y="7" width="2.5" height="8" fill="#e8e8e0" stroke="#a0a0a0" stroke-width="0.6"/></svg>
<svg style="left:989px;top:706px;" width="16" height="16" viewBox="0 0 16 16"><circle cx="4.5" cy="4.5" r="3.6" fill="none" stroke="#000" stroke-width="1.6" stroke-dasharray="1.8 1.2"/><circle cx="4.5" cy="4.5" r="1.3" fill="#000"/><rect x="7" y="7" width="8" height="8" fill="#808080" stroke="#404040" stroke-width="0.6"/></svg>
<svg style="left:1010px;top:718px;" width="7" height="4" viewBox="0 0 7 4"><path d="M0 0H7L3.5 4Z" fill="#303040"/></svg>
<svg style="left:1031px;top:705px;" width="6" height="20" viewBox="0 0 6 20"><rect x="1" y="1" width="1" height="1" fill="#e8ebf2"/><rect x="0" y="0" width="1" height="1" fill="#5b6d8a"/><rect x="5" y="1" width="1" height="1" fill="#e8ebf2"/><rect x="4" y="0" width="1" height="1" fill="#5b6d8a"/><rect x="3" y="3" width="1" height="1" fill="#e8ebf2"/><rect x="2" y="2" width="1" height="1" fill="#5b6d8a"/><rect x="1" y="5" width="1" height="1" fill="#e8ebf2"/><rect x="0" y="4" width="1" height="1" fill="#5b6d8a"/><rect x="5" y="5" width="1" height="1" fill="#e8ebf2"/><rect x="4" y="4" width="1" height="1" fill="#5b6d8a"/><rect x="3" y="7" width="1" height="1" fill="#e8ebf2"/><rect x="2" y="6" width="1" height="1" fill="#5b6d8a"/><rect x="1" y="9" width="1" height="1" fill="#e8ebf2"/><rect x="0" y="8" width="1" height="1" fill="#5b6d8a"/><rect x="5" y="9" width="1" height="1" fill="#e8ebf2"/><rect x="4" y="8" width="1" height="1" fill="#5b6d8a"/><rect x="3" y="11" width="1" height="1" fill="#e8ebf2"/><rect x="2" y="10" width="1" height="1" fill="#5b6d8a"/><rect x="1" y="13" width="1" height="1" fill="#e8ebf2"/><rect x="0" y="12" width="1" height="1" fill="#5b6d8a"/><rect x="5" y="13" width="1" height="1" fill="#e8ebf2"/><rect x="4" y="12" width="1" height="1" fill="#5b6d8a"/><rect x="3" y="15" width="1" height="1" fill="#e8ebf2"/><rect x="2" y="14" width="1" height="1" fill="#5b6d8a"/><rect x="1" y="17" width="1" height="1" fill="#e8ebf2"/><rect x="0" y="16" width="1" height="1" fill="#5b6d8a"/><rect x="5" y="17" width="1" height="1" fill="#e8ebf2"/><rect x="4" y="16" width="1" height="1" fill="#5b6d8a"/></svg>
<svg style="left:1046px;top:706px;" width="16" height="16" viewBox="0 0 16 16"><path d="M1 2V15H15M4 7V15M7 5V15M10 8V15M13 6V15" stroke="#000" stroke-width="1.3" fill="none"/></svg>
<svg style="left:1067px;top:706px;" width="16" height="16" viewBox="0 0 16 16"><path d="M2 15H14L12 9Q10 5 8 4L2 15" stroke="#000" stroke-width="1.3" fill="none"/><path d="M8 1V5" stroke="#000" stroke-width="1.3"/></svg>
<svg style="left:1096px;top:703px;" width="9" height="20" viewBox="0 0 9 20"><path d="M1 1L4.5 4L8 1M1 5L4.5 8L8 5" stroke="#303040" fill="none"/><path d="M0.5 14H8.5L4.5 18Z" fill="#303040"/></svg>
<div class="a" style="left:0px;top:726px;width:1109px;height:21px;background:#045a96;"></div>
<div class="t" style="left:4px;top:730px;font-size:12px;color:#fff;font-weight:normal;letter-spacing:-0.35px;">For Help, press F1</div>
<div class="a" style="left:492px;top:729px;width:96px;height:16px;background:#c6d0de;"></div>
<svg style="left:465px;top:729px;" width="18" height="17" viewBox="0 0 18 17"><circle cx="3" cy="7.8" r="2.2" fill="#f8f000" stroke="#000" stroke-width="0.9"/><circle cx="3" cy="13.8" r="2.2" fill="#f8f000" stroke="#000" stroke-width="0.9"/><circle cx="7" cy="10.8" r="2.2" fill="#a09800" stroke="#000" stroke-width="0.9"/><path d="M6.5 3.5L17 13" stroke="#000" stroke-width="2.6"/><path d="M6.5 3.5L17 13" stroke="#a09800" stroke-width="1.3"/><path d="M6.5 3.5L9.5 6.5" stroke="#f8f000" stroke-width="1.6"/><path d="M14.5 0V7M11 3.5H18M12.5 1.5L16.5 5.5M16.5 1.5L12.5 5.5" stroke="#f8f000" stroke-width="1"/><circle cx="14.5" cy="3.5" r="1.7" fill="#f8f000"/></svg>
<svg style="left:595px;top:730px;" width="14" height="14" viewBox="0 0 14 14"><rect x="0.5" y="0.5" width="13" height="13" fill="none" stroke="#c8b890"/><path d="M7 1V13M1 7H13" stroke="#c8b890" stroke-width="2"/><path d="M3.5 1H10.5L7 4.5ZM3.5 13H10.5L7 9.5ZM1 3.5V10.5L4.5 7ZM13 3.5V10.5L9.5 7Z" fill="#c8b890"/></svg>
<svg style="left:711px;top:731px;" width="14" height="11" viewBox="0 0 14 11"><path d="M0 3H3L4 1H10L11 3H14V11H0Z" fill="#a8a8a8"/><circle cx="7" cy="6.5" r="3" fill="#b8d8e8" stroke="#606060" stroke-width="0.8"/></svg>
<div class="a" style="left:709px;top:729px;width:1px;height:1px;background:#000;"></div>
<svg style="left:1096px;top:734px;" width="10" height="10" viewBox="0 0 10 10"><rect x="8" y="0" width="1" height="1" fill="#c0d0e0"/><rect x="8" y="3" width="1" height="1" fill="#c0d0e0"/><rect x="5" y="3" width="1" height="1" fill="#c0d0e0"/><rect x="8" y="6" width="1" height="1" fill="#c0d0e0"/><rect x="5" y="6" width="1" height="1" fill="#c0d0e0"/><rect x="2" y="6" width="1" height="1" fill="#c0d0e0"/></svg>
<div class="t" style="left:494px;top:730px;font-size:12px;color:#1e1e1e;font-weight:normal;letter-spacing:-0.3px;">Manual</div>
<div class="t" style="left:613px;top:730px;font-size:12px;color:#fff;font-weight:normal;letter-spacing:-0.3px;">1cm/A</div>
<div class="t" style="left:728px;top:730px;font-size:12px;color:#fff;font-weight:normal;letter-spacing:0px;">0</div>
<div class="t" style="left:754px;top:730px;font-size:12px;color:#fff;font-weight:normal;letter-spacing:-0.3px;">81 parms</div>
<div class="t" style="left:826px;top:730px;font-size:12px;color:#e8f040;font-weight:normal;letter-spacing:-0.3px;">1/25 at.</div>
<div class="t" style="left:896px;top:730px;font-size:12px;color:#fff;font-weight:normal;letter-spacing:-0.3px;">24 bonds</div>
<div class="t" style="left:968px;top:730px;font-size:12px;color:#e8f040;font-weight:normal;letter-spacing:-0.3px;">1/1 mol.</div>
<div class="t" style="left:1031px;top:730px;font-size:12px;color:#fff;font-weight:normal;letter-spacing:-0.3px;">0 polyh.</div>
<div class="a" style="left:0;top:0;width:1109px;height:747px;border:1px solid #505050;border-bottom-color:#736b62;z-index:50"></div>
</body></html>
